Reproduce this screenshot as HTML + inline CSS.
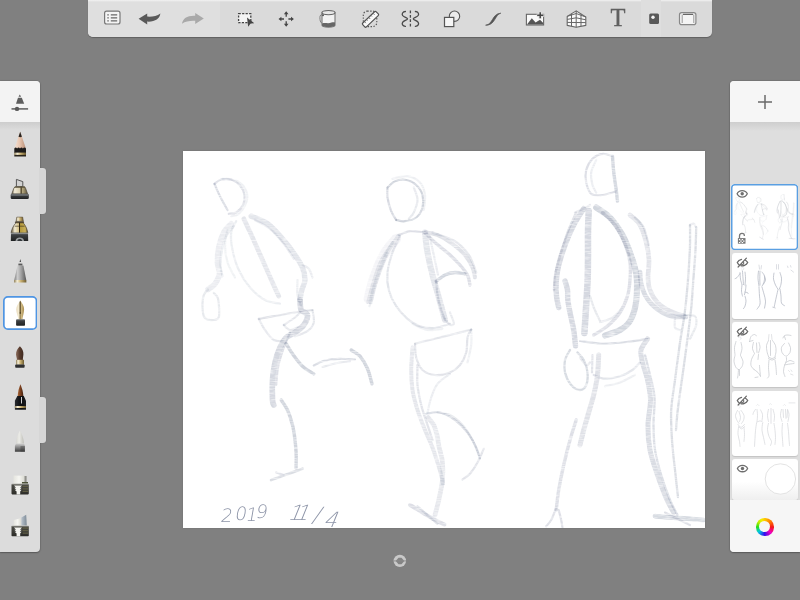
<!DOCTYPE html>
<html lang="en"><head><meta charset="utf-8"><title>Sketch</title>
<style>
*{box-sizing:border-box;margin:0;padding:0}
html,body{width:800px;height:600px;overflow:hidden;background:#808080;font-family:"Liberation Sans",sans-serif}
#app{position:relative;width:800px;height:600px;background:#808080;overflow:hidden}
.abs{position:absolute}
#topbar{left:88px;top:0;width:624px;height:37px;background:#dadada;border-radius:0 0 5px 5px;box-shadow:0 1px 1px rgba(0,0,0,.25);overflow:hidden}
#topbar .lt{left:0;top:0;width:132px;height:37px;background:#dfdfdf}
#topbar .hl{left:0;top:0;width:624px;height:2px;background:linear-gradient(#f2f2f2,rgba(240,240,240,0))}
#topbar svg{position:absolute;left:0;top:0}
#tT{position:absolute;left:519.8px;top:4.4px;width:20px;text-align:center;font:24.5px/28px "Liberation Serif",serif;color:#606060;-webkit-text-stroke:.35px #606060;will-change:transform}
#canvas{left:183px;top:151px;width:522px;height:377px;background:#fff;box-shadow:0 0 2px rgba(0,0,0,.15)}
#left{left:0;top:81px;width:40px;height:471px;background:#dcdcdc;border-radius:0 4px 4px 0;box-shadow:0 0 1.5px rgba(0,0,0,.4),0 1px 1.5px rgba(0,0,0,.25)}
#left .hd{left:0;top:0;width:40px;height:41px;background:#f3f3f3;border-radius:0 4px 0 0}
#left .sh{left:0;top:41px;width:40px;height:8px;background:linear-gradient(#cdcdcd,#dcdcdc)}
.tab{left:40px;width:6px;height:46px;background:#d6d6d6;border-radius:0 3px 3px 0;box-shadow:0 0 1px rgba(0,0,0,.25)}
#sel{left:2.8px;top:214.9px;width:34.3px;height:34px}
#right{left:730px;top:81px;width:70px;height:471px;background:#dedede;border-radius:4px 0 0 4px;box-shadow:0 0 1.5px rgba(0,0,0,.4),0 1px 1.5px rgba(0,0,0,.25)}
#rin{left:0;top:0;width:70px;height:471px;border-radius:4px 0 0 4px;overflow:hidden}
#rc{left:0;top:1px;width:70px;height:470px}
#right .hd{left:0;top:-1px;width:70px;height:41px;background:#f6f6f6}
#right .sh{left:0;top:40px;width:70px;height:9px;background:linear-gradient(#cecece,#dedede)}
#right .ft{left:0;top:418px;width:70px;height:52px;background:#f6f6f6}
.layer{left:2px;width:66px;background:#fff;border-radius:3px;box-shadow:0 1px 1px rgba(0,0,0,.12);overflow:hidden}
.layer.on{box-shadow:none}
.layer svg{position:absolute;left:0;top:0}
#ring{left:26px;top:436px;width:17.5px;height:17.5px;border-radius:50%;background:conic-gradient(from 0deg,#ffc400 0deg,#ff7a00 45deg,#f41818 90deg,#f000c0 135deg,#3010f0 185deg,#00c8e0 232deg,#2adf10 272deg,#b8ee00 305deg,#f4ee00 335deg,#ffc400 360deg)}
#ring i{position:absolute;left:3.25px;top:3.25px;width:11px;height:11px;border-radius:50%;background:#f6f6f6}
</style></head><body>
<div id="app">

<div id="canvas" class="abs">
<svg width="522" height="377" viewBox="0 0 522 377">
<defs><filter id="pb" x="-5%" y="-5%" width="110%" height="110%"><feGaussianBlur stdDeviation="0.5" result="b"/><feTurbulence type="fractalNoise" baseFrequency="0.12 0.85" numOctaves="2" seed="4" result="n"/><feColorMatrix in="n" type="matrix" values="0 0 0 0 0 0 0 0 0 0 0 0 0 0 0 0 0 0 1.5 0.1" result="a"/><feComposite in="b" in2="a" operator="in" result="c"/><feGaussianBlur in="c" stdDeviation="0.4"/></filter></defs>
<g fill="none" stroke="#5d6a88" stroke-linecap="round" stroke-linejoin="round" filter="url(#pb)">
<path d="M31.5 32.8C32.4 34.8 34.8 40.9 37.0 45.2C39.2 49.6 43.2 56.7 44.5 59.0" stroke-width="2.2" opacity="0.24"/>
<path d="M31.5 32.8C32.6 32.0 35.5 29.2 38.2 28.5C41.0 27.8 45.1 27.5 48.2 28.5C51.4 29.5 54.8 31.9 57.0 34.5C59.2 37.1 61.0 40.8 61.5 44.0C62.0 47.2 61.4 51.1 60.0 54.0C58.6 56.9 55.6 60.0 53.2 61.5C50.9 63.0 47.0 62.5 45.8 62.8" stroke-width="2.2" opacity="0.21"/>
<path d="M39.5 27.8C42.0 28.2 50.5 28.2 54.5 30.2C58.5 32.3 61.8 36.7 63.2 40.2C64.7 43.8 64.5 47.8 63.2 51.5C62.0 55.2 58.2 60.5 55.8 62.8C53.2 65.0 49.5 64.8 48.2 65.2" stroke-width="2.2" opacity="0.10"/>
<path d="M48.2 72.8C47.0 74.2 42.8 77.5 40.8 81.5C38.7 85.5 36.8 91.5 35.8 96.5C34.7 101.5 34.4 107.1 34.5 111.5C34.6 115.9 36.9 119.2 36.5 122.8C36.1 126.3 33.9 130.1 32.0 132.8C30.1 135.4 26.2 137.5 25.0 138.5" stroke-width="5.7" opacity="0.13"/>
<path d="M50.8 75.2C49.5 76.9 45.2 81.3 43.2 85.2C41.3 89.2 40.0 94.2 39.0 99.0C38.0 103.8 37.4 109.6 37.5 114.0C37.6 118.4 39.2 123.4 39.5 125.2" stroke-width="2.2" opacity="0.12"/>
<path d="M25.0 138.5C24.3 139.4 21.7 141.2 20.8 144.0C19.8 146.8 19.4 151.5 19.5 155.2C19.6 159.0 19.6 164.2 21.5 166.5C23.4 168.8 28.3 169.2 30.8 169.0C33.2 168.8 35.3 168.8 36.0 165.2C36.7 161.7 35.9 151.6 35.0 147.8C34.1 143.9 31.5 143.0 30.8 142.0" stroke-width="2.2" opacity="0.15"/>
<path d="M53.2 70.2C52.4 72.1 48.9 76.7 48.2 81.5C47.6 86.3 48.2 92.8 49.5 99.0C50.8 105.2 52.8 112.8 55.8 119.0C58.7 125.2 62.6 131.5 67.0 136.5C71.4 141.5 77.0 146.3 82.0 149.0C87.0 151.7 94.5 152.1 97.0 152.8" stroke-width="2.2" opacity="0.12"/>
<path d="M60.8 67.8C62.2 70.9 66.4 79.6 69.5 86.5C72.6 93.4 76.2 101.5 79.5 109.0C82.8 116.5 86.8 125.5 89.5 131.5C92.2 137.5 94.7 143.0 95.8 145.2" stroke-width="4.7" opacity="0.17"/>
<path d="M68.2 65.2C71.0 66.5 79.3 69.0 84.5 72.8C89.7 76.5 94.9 82.5 99.5 87.8C104.1 93.0 108.7 99.2 112.0 104.0C115.3 108.8 117.8 112.3 119.5 116.5C121.2 120.7 122.1 125.2 122.0 129.0C121.9 132.8 119.6 135.7 118.8 139.0C117.9 142.3 117.3 147.3 117.0 149.0" stroke-width="5.4" opacity="0.18"/>
<path d="M72.0 69.0C74.5 70.5 82.2 73.8 87.0 77.8C91.8 81.7 96.8 87.8 100.8 92.8C104.7 97.8 109.1 105.2 110.8 107.8" stroke-width="2.2" opacity="0.12"/>
<path d="M119.5 114.0C120.5 114.6 124.1 115.7 125.8 117.8C127.4 119.8 128.9 125.0 129.5 126.5" stroke-width="2.2" opacity="0.13"/>
<path d="M44.5 79.0C44.1 81.5 42.0 88.6 42.0 94.0C42.0 99.4 42.8 106.1 44.5 111.5C46.2 116.9 50.8 124.0 52.0 126.5" stroke-width="2.2" opacity="0.09"/>
<path d="M114.5 129.0C114.5 131.5 113.9 139.6 114.5 144.0C115.1 148.4 117.6 153.4 118.2 155.2" stroke-width="2.2" opacity="0.12"/>
<path d="M75.8 167.8C78.9 167.2 88.0 165.6 94.5 164.5C101.0 163.4 108.7 161.9 114.5 161.0C120.3 160.1 127.0 159.3 129.5 159.0" stroke-width="2.2" opacity="0.20"/>
<path d="M75.8 167.8C76.8 169.6 79.5 175.5 82.0 179.0C84.5 182.5 87.6 187.1 90.8 189.0C93.9 190.9 99.1 190.0 100.8 190.2" stroke-width="2.2" opacity="0.17"/>
<path d="M129.5 159.0C129.7 161.1 131.6 168.0 130.8 171.5C129.9 175.0 127.6 178.0 124.5 180.2C121.4 182.5 114.1 184.4 112.0 185.2" stroke-width="2.2" opacity="0.17"/>
<path d="M100.8 174.0C102.6 172.8 109.3 168.6 112.0 166.5C114.7 164.4 116.2 162.3 117.0 161.5" stroke-width="2.2" opacity="0.16"/>
<path d="M100.8 174.0C101.8 174.8 104.7 178.6 107.0 179.0C109.3 179.4 113.2 176.9 114.5 176.5" stroke-width="2.2" opacity="0.16"/>
<path d="M117.0 149.0C117.2 150.7 117.0 156.5 118.2 159.0C119.5 161.5 124.1 161.5 124.5 164.0C124.9 166.5 122.8 171.1 120.8 174.0C118.7 176.9 114.9 179.4 112.0 181.5C109.1 183.6 105.8 184.0 103.2 186.5C100.8 189.0 98.9 192.3 97.0 196.5C95.1 200.7 93.2 206.1 92.0 211.5C90.8 216.9 89.9 222.8 89.5 229.0C89.1 235.2 89.3 244.8 89.5 249.0C89.7 253.2 90.5 253.2 90.8 254.0" stroke-width="5.7" opacity="0.26"/>
<path d="M107.0 181.5C105.8 184.4 102.0 193.2 100.0 199.0C98.0 204.8 96.1 210.7 95.0 216.5C93.9 222.3 93.5 231.1 93.2 234.0" stroke-width="2.2" opacity="0.21"/>
<path d="M103.2 192.8C104.3 194.4 106.8 199.0 109.5 202.8C112.2 206.5 116.0 211.9 119.5 215.2C123.0 218.6 128.9 221.5 130.8 222.8" stroke-width="3.4" opacity="0.29"/>
<path d="M130.8 214.5C132.6 213.7 137.6 210.6 142.0 209.5C146.4 208.4 152.0 207.9 157.0 207.8C162.0 207.6 169.5 208.4 172.0 208.5" stroke-width="2.2" opacity="0.24"/>
<path d="M139.5 216.0C142.0 215.3 149.9 213.0 154.5 212.0C159.1 211.0 164.9 210.5 167.0 210.2" stroke-width="2.2" opacity="0.14"/>
<path d="M168.2 199.0C169.7 200.0 174.3 202.1 177.0 205.2C179.7 208.4 182.5 213.2 184.5 217.8C186.5 222.3 188.2 230.2 189.0 232.8" stroke-width="3.4" opacity="0.29"/>
<path d="M98.2 249.0C99.3 250.7 102.6 254.8 104.5 259.0C106.4 263.2 108.2 269.0 109.5 274.0C110.8 279.0 111.4 284.0 112.0 289.0C112.6 294.0 113.1 299.3 113.2 304.0C113.4 308.7 113.0 314.8 113.0 317.0" stroke-width="3.4" opacity="0.29"/>
<path d="M88.2 329.0C90.5 328.2 96.8 325.9 102.0 324.0C107.2 322.1 116.6 318.8 119.5 317.8" stroke-width="2.8" opacity="0.23"/>
<path d="M93.2 321.5L100.8 324.0" stroke-width="2.2" opacity="0.18"/>
<path d="M204.5 36.5C204.5 38.2 203.9 42.5 204.5 46.5C205.1 50.5 206.8 56.5 208.2 60.2C209.7 64.0 212.4 67.5 213.2 69.0" stroke-width="2.2" opacity="0.26"/>
<path d="M204.5 36.5C205.8 35.5 208.9 31.5 212.0 30.2C215.1 29.0 219.7 28.4 223.2 29.0C226.8 29.6 230.5 31.5 233.2 34.0C236.0 36.5 238.5 40.2 239.5 44.0C240.5 47.8 240.5 52.8 239.5 56.5C238.5 60.2 236.2 64.2 233.2 66.5C230.3 68.8 225.3 69.8 222.0 70.2C218.7 70.7 214.7 69.2 213.2 69.0" stroke-width="2.2" opacity="0.29"/>
<path d="M209.5 27.8C212.0 27.3 219.9 24.6 224.5 25.2C229.1 25.9 234.1 28.4 237.0 31.5C239.9 34.6 241.4 39.4 242.0 44.0C242.6 48.6 241.0 56.5 240.8 59.0" stroke-width="2.2" opacity="0.11"/>
<path d="M230.8 36.5C231.4 38.6 234.5 44.8 234.5 49.0C234.5 53.2 232.2 58.4 230.8 61.5C229.3 64.6 226.6 66.7 225.8 67.8" stroke-width="2.2" opacity="0.14"/>
<path d="M215.8 84.0C217.6 83.4 223.0 80.8 227.0 80.2C231.0 79.8 237.4 80.9 239.5 81.0" stroke-width="2.2" opacity="0.21"/>
<path d="M213.2 87.8C211.3 90.2 204.7 97.5 201.5 102.8C198.3 108.0 196.1 113.8 194.0 119.0C191.9 124.2 190.4 129.2 189.0 134.0C187.6 138.8 186.1 145.5 185.5 147.8" stroke-width="9.9" opacity="0.07"/>
<path d="M215.8 84.5C214.0 87.1 208.1 94.5 205.0 100.2C201.9 106.0 199.3 113.0 197.0 119.0C194.7 125.0 192.8 131.1 191.2 136.5C189.7 141.9 188.1 149.0 187.5 151.5" stroke-width="4.0" opacity="0.14"/>
<path d="M209.5 91.5C207.6 94.4 201.4 102.8 198.2 109.0C195.1 115.2 193.0 121.9 190.8 129.0C188.5 136.1 185.5 147.8 184.5 151.5" stroke-width="2.8" opacity="0.14"/>
<path d="M204.5 101.5C202.9 105.2 197.6 116.9 195.0 124.0C192.4 131.1 190.4 138.8 189.0 144.0C187.6 149.2 186.9 153.4 186.5 155.2" stroke-width="2.2" opacity="0.13"/>
<path d="M217.0 85.2C215.8 88.0 211.6 95.5 209.5 101.5C207.4 107.5 205.1 115.2 204.5 121.5C203.9 127.8 204.3 133.4 205.8 139.0C207.2 144.6 210.1 150.5 213.2 155.2C216.4 160.0 220.5 164.4 224.5 167.8C228.5 171.1 232.4 173.7 237.0 175.2C241.6 176.8 247.0 177.4 252.0 177.0C257.0 176.6 264.5 173.5 267.0 172.8" stroke-width="2.2" opacity="0.18"/>
<path d="M242.0 81.5C242.4 84.8 243.2 94.4 244.5 101.5C245.8 108.6 247.6 116.5 249.5 124.0C251.4 131.5 253.7 139.0 255.8 146.5C257.8 154.0 261.0 165.2 262.0 169.0" stroke-width="6.1" opacity="0.18"/>
<path d="M246.5 84.5C247.2 87.8 249.3 97.4 250.8 104.0C252.2 110.6 254.3 120.7 255.0 124.0" stroke-width="2.2" opacity="0.13"/>
<path d="M242.0 81.5C244.1 81.9 249.9 82.1 254.5 84.0C259.1 85.9 264.9 89.4 269.5 92.8C274.1 96.1 278.7 100.0 282.0 104.0C285.3 108.0 287.8 112.8 289.5 116.5C291.2 120.2 291.6 124.8 292.0 126.5" stroke-width="4.0" opacity="0.20"/>
<path d="M249.5 81.5C253.2 83.0 266.0 86.5 272.0 90.2C278.0 94.0 282.2 98.8 285.8 104.0C289.3 109.2 292.0 118.6 293.2 121.5" stroke-width="2.3" opacity="0.17"/>
<path d="M242.0 81.5C243.7 83.2 247.8 87.8 252.0 91.5C256.2 95.2 262.8 100.2 267.0 104.0C271.2 107.8 274.1 110.7 277.0 114.0C279.9 117.3 282.8 120.7 284.5 124.0C286.2 127.3 286.6 132.3 287.0 134.0" stroke-width="3.4" opacity="0.21"/>
<path d="M253.2 130.2C254.7 129.2 258.9 125.5 262.0 124.0C265.1 122.5 268.7 121.7 272.0 121.5C275.3 121.3 280.3 122.5 282.0 122.8" stroke-width="3.4" opacity="0.27"/>
<path d="M253.2 130.2C253.5 132.5 253.7 139.2 254.5 144.0C255.3 148.8 257.0 154.8 258.2 159.0C259.5 163.2 261.4 167.3 262.0 169.0" stroke-width="2.2" opacity="0.22"/>
<path d="M262.0 167.8C262.6 168.6 264.5 171.7 265.8 172.8C267.0 173.8 268.7 174.2 269.5 174.0C270.3 173.8 271.2 173.6 270.8 171.5C270.3 169.4 267.6 163.2 267.0 161.5" stroke-width="2.2" opacity="0.14"/>
<path d="M229.5 172.8C232.0 173.8 239.5 178.2 244.5 179.0C249.5 179.8 257.0 178.0 259.5 177.8" stroke-width="2.2" opacity="0.10"/>
<path d="M232.0 192.8C235.3 191.9 245.3 189.4 252.0 187.8C258.7 186.1 266.0 184.3 272.0 182.8C278.0 181.2 285.5 179.2 288.2 178.5" stroke-width="2.2" opacity="0.17"/>
<path d="M232.0 192.8C232.2 195.0 232.0 202.1 233.2 206.5C234.5 210.9 236.4 216.1 239.5 219.0C242.6 221.9 247.4 223.6 252.0 224.0C256.6 224.4 262.8 223.2 267.0 221.5C271.2 219.8 274.3 217.3 277.0 214.0C279.7 210.7 282.0 206.1 283.2 201.5C284.5 196.9 283.7 190.3 284.5 186.5C285.3 182.7 287.6 179.8 288.2 178.5" stroke-width="2.2" opacity="0.19"/>
<path d="M288.2 178.5C288.2 181.1 288.9 188.5 288.2 194.0C287.6 199.5 285.1 208.6 284.5 211.5" stroke-width="2.2" opacity="0.10"/>
<path d="M229.5 196.5C229.3 200.2 228.2 211.9 228.2 219.0C228.2 226.1 228.5 232.3 229.5 239.0C230.5 245.7 232.4 252.3 234.5 259.0C236.6 265.7 239.5 272.8 242.0 279.0C244.5 285.2 247.4 291.1 249.5 296.5C251.6 301.9 253.0 306.9 254.5 311.5C256.0 316.1 257.3 320.5 258.2 324.0C259.2 327.5 259.7 331.3 260.0 332.8" stroke-width="4.0" opacity="0.17"/>
<path d="M234.5 214.0C234.5 217.3 233.9 227.3 234.5 234.0C235.1 240.7 236.6 247.3 238.2 254.0C239.9 260.7 242.6 268.2 244.5 274.0C246.4 279.8 248.7 286.5 249.5 289.0" stroke-width="2.3" opacity="0.19"/>
<path d="M267.0 222.8C264.9 224.4 257.6 228.8 254.5 232.8C251.4 236.7 249.9 241.7 248.2 246.5C246.6 251.3 245.1 259.0 244.5 261.5" stroke-width="2.2" opacity="0.13"/>
<path d="M245.0 266.5C246.0 267.8 249.2 271.1 250.8 274.0C252.2 276.9 253.1 280.2 254.0 284.0C254.9 287.8 255.3 291.9 256.2 296.5C257.2 301.1 259.0 306.1 259.5 311.5C260.0 316.9 260.1 322.8 259.5 329.0C258.9 335.2 257.0 343.2 255.8 349.0C254.5 354.8 252.6 361.5 252.0 364.0" stroke-width="4.7" opacity="0.16"/>
<path d="M243.2 262.8C245.5 262.5 252.2 260.5 257.0 261.5C261.8 262.5 267.4 265.7 272.0 269.0C276.6 272.3 281.0 276.9 284.5 281.5C288.0 286.1 291.2 292.1 293.2 296.5C295.3 300.9 296.4 305.9 297.0 307.8" stroke-width="2.2" opacity="0.22"/>
<path d="M254.5 261.5C256.6 261.9 262.8 261.9 267.0 264.0C271.2 266.1 275.8 269.8 279.5 274.0C283.2 278.2 286.8 284.0 289.5 289.0C292.2 294.0 294.7 301.5 295.8 304.0" stroke-width="2.2" opacity="0.15"/>
<path d="M300.8 297.8C299.7 300.0 296.8 307.3 294.5 311.5C292.2 315.7 289.5 319.9 287.0 322.8C284.5 325.6 280.8 327.5 279.5 328.5" stroke-width="2.2" opacity="0.19"/>
<path d="M227.0 354.0C229.1 355.2 235.3 359.0 239.5 361.5C243.7 364.0 248.3 367.0 252.0 369.0C255.7 371.0 259.9 372.8 261.5 373.5" stroke-width="4.0" opacity="0.21"/>
<path d="M234.5 355.2C236.6 357.1 243.7 363.6 247.0 366.5C250.3 369.4 253.2 371.7 254.5 372.8" stroke-width="2.2" opacity="0.19"/>
<path d="M429.5 5.2C429.7 8.0 430.1 15.9 430.8 21.5C431.4 27.1 432.6 34.2 433.2 39.0C433.9 43.8 434.3 48.4 434.5 50.2" stroke-width="3.4" opacity="0.27"/>
<path d="M429.5 5.2C427.8 4.8 422.8 2.3 419.5 2.8C416.2 3.2 412.2 5.0 409.5 7.8C406.8 10.5 404.3 15.0 403.2 19.0C402.2 23.0 402.4 27.5 403.2 31.5C404.1 35.5 405.5 40.7 408.2 42.8C411.0 44.8 415.3 44.4 419.5 44.0C423.7 43.6 431.0 40.9 433.2 40.2" stroke-width="2.2" opacity="0.21"/>
<path d="M413.2 9.0C412.4 11.1 408.9 17.3 408.2 21.5C407.6 25.7 408.7 30.7 409.5 34.0C410.3 37.3 412.6 40.2 413.2 41.5" stroke-width="2.2" opacity="0.13"/>
<path d="M407.0 54.0C406.0 54.6 403.2 56.5 400.8 57.8C398.2 59.0 393.5 60.9 392.0 61.5" stroke-width="2.2" opacity="0.16"/>
<path d="M400.7 57.7C399.0 60.4 393.8 68.0 390.7 74.0C387.6 80.0 384.5 87.3 382.0 94.0C379.5 100.7 377.2 107.8 375.7 114.0C374.2 120.2 373.6 126.3 373.2 131.5C372.8 136.7 373.1 140.8 373.5 145.0C373.9 149.2 375.3 154.6 375.7 156.5" stroke-width="5.4" opacity="0.26"/>
<path d="M393.2 61.5C391.8 64.8 387.0 74.8 384.5 81.5C382.0 88.2 380.3 94.4 378.2 101.5C376.1 108.6 373.2 117.8 372.0 124.0C370.8 130.2 371.2 136.5 371.0 139.0" stroke-width="2.3" opacity="0.20"/>
<path d="M382.0 130.0C382.4 131.5 384.0 135.8 384.5 139.0C385.0 142.2 384.4 145.2 384.8 149.0C385.2 152.8 386.0 156.5 387.0 161.5C388.0 166.5 389.8 173.4 390.7 179.0C391.6 184.6 392.2 192.3 392.5 195.0" stroke-width="5.4" opacity="0.26"/>
<path d="M405.7 60.0C405.6 63.6 405.1 73.8 405.0 81.5C404.9 89.2 405.1 98.4 405.0 106.5C404.9 114.6 404.9 122.1 404.6 130.0C404.3 137.9 403.7 145.3 403.2 154.0C402.7 162.7 401.7 177.3 401.4 182.0" stroke-width="6.5" opacity="0.26"/>
<path d="M413.2 56.5C415.5 58.2 422.6 61.9 427.0 66.5C431.4 71.1 436.2 78.2 439.5 84.0C442.8 89.8 444.9 96.0 447.0 101.5C449.1 107.0 450.8 112.1 452.0 117.0C453.2 121.9 453.9 124.8 454.0 131.0C454.1 137.2 453.8 147.5 452.6 154.0C451.4 160.5 449.6 165.8 447.0 170.0C444.4 174.2 441.2 176.6 437.0 179.0C432.8 181.4 424.5 183.6 422.0 184.5" stroke-width="6.1" opacity="0.28"/>
<path d="M419.5 61.5C421.6 63.6 428.2 68.8 432.0 74.0C435.8 79.2 439.5 86.8 442.0 93.0C444.5 99.2 446.2 105.0 447.0 111.0C447.8 117.0 447.4 123.3 447.0 129.0C446.6 134.7 446.2 139.6 444.5 145.0C442.8 150.4 440.3 156.5 437.0 161.5C433.7 166.5 428.9 171.2 424.5 175.0C420.1 178.8 413.0 182.5 410.7 184.0" stroke-width="3.4" opacity="0.21"/>
<path d="M407.0 145.0C407.7 147.0 409.3 152.8 411.0 157.0C412.7 161.2 416.0 167.8 417.0 170.0" stroke-width="2.2" opacity="0.15"/>
<path d="M417.0 171.0C419.0 170.3 425.3 169.3 429.0 167.0C432.7 164.7 437.3 158.7 439.0 157.0" stroke-width="2.2" opacity="0.13"/>
<path d="M447.0 64.0C448.7 65.7 454.3 69.4 457.0 74.0C459.7 78.6 461.7 85.7 463.2 91.5C464.7 97.3 465.7 103.1 466.0 109.0C466.3 114.9 464.8 122.0 465.0 127.0C465.2 132.0 465.4 134.9 467.0 139.0C468.6 143.1 471.2 148.0 474.5 151.5C477.8 155.0 482.6 157.8 487.0 160.0C491.4 162.2 498.7 164.2 501.0 165.0" stroke-width="4.7" opacity="0.19"/>
<path d="M452.0 66.5C453.4 68.2 458.4 71.9 460.7 76.5C463.0 81.1 464.9 91.1 465.7 94.0" stroke-width="2.2" opacity="0.17"/>
<path d="M457.0 121.0C457.2 122.8 457.2 128.2 458.0 132.0C458.8 135.8 460.1 140.3 462.0 144.0C463.9 147.7 466.6 151.1 469.5 154.0C472.4 156.9 476.2 159.6 479.5 161.5C482.8 163.4 485.1 164.8 489.0 165.5C492.9 166.2 500.7 165.9 503.0 166.0" stroke-width="4.7" opacity="0.24"/>
<path d="M507.0 74.0C507.0 77.3 507.2 86.5 507.0 94.0C506.8 101.5 506.3 109.8 505.7 119.0C505.1 128.2 504.0 140.7 503.2 149.0C502.4 157.3 501.7 161.9 500.7 169.0C499.7 176.1 498.4 181.5 497.0 191.5C495.6 201.5 493.5 217.8 492.0 229.0C490.5 240.2 488.7 249.0 488.2 259.0C487.7 269.0 488.4 279.0 489.0 289.0C489.6 299.0 491.0 309.5 492.0 319.0C493.0 328.5 494.5 341.5 495.0 346.0" stroke-width="2.3" opacity="0.23"/>
<path d="M513.2 76.5C513.1 80.2 512.9 91.1 512.5 99.0C512.1 106.9 511.4 114.8 510.7 124.0C510.0 133.2 509.4 144.0 508.5 154.0C507.6 164.0 506.4 172.8 505.0 184.0C503.6 195.2 501.7 208.8 500.0 221.0C498.3 233.2 496.2 247.3 495.0 257.0C493.8 266.7 493.3 275.3 493.0 279.0" stroke-width="2.3" opacity="0.23"/>
<path d="M507.0 74.0C507.6 73.8 509.7 72.3 510.7 72.7C511.7 73.1 512.8 75.9 513.2 76.5" stroke-width="2.2" opacity="0.13"/>
<path d="M492.0 166.5C492.0 168.2 491.2 174.4 492.0 176.5C492.8 178.6 496.2 178.6 497.0 179.0" stroke-width="2.2" opacity="0.13"/>
<path d="M502.0 164.0C503.7 164.2 510.1 163.5 512.0 165.2C513.9 166.9 513.6 171.1 513.2 174.0C512.8 176.9 510.5 180.4 509.5 182.7C508.5 185.0 507.4 186.9 507.0 187.7" stroke-width="2.2" opacity="0.15"/>
<path d="M387.0 199.0C386.2 200.7 382.8 205.2 382.0 209.0C381.2 212.8 381.0 217.3 382.0 221.5C383.0 225.7 385.7 231.1 388.2 234.0C390.7 236.9 394.5 239.0 397.0 239.0C399.5 239.0 402.0 236.9 403.2 234.0C404.5 231.1 404.9 225.7 404.5 221.5C404.1 217.3 402.4 212.3 400.7 209.0C399.0 205.7 395.5 202.8 394.5 201.5" stroke-width="2.3" opacity="0.25"/>
<path d="M397.0 206.5C398.0 207.8 401.5 213.2 403.2 214.0C404.9 214.8 406.4 211.9 407.0 211.5" stroke-width="2.2" opacity="0.16"/>
<path d="M397.0 190.0C400.5 190.4 410.3 192.3 418.0 192.5C425.7 192.7 435.2 191.8 443.0 191.0C450.8 190.2 460.9 188.5 464.5 188.0" stroke-width="2.2" opacity="0.24"/>
<path d="M410.7 224.0C412.6 224.6 417.6 227.5 422.0 227.7C426.4 227.9 432.4 226.6 437.0 225.2C441.6 223.8 446.2 221.3 449.5 219.0C452.8 216.7 455.8 212.8 457.0 211.5" stroke-width="2.2" opacity="0.18"/>
<path d="M422.0 235.2C424.5 234.6 432.0 233.4 437.0 231.5C442.0 229.6 449.5 225.2 452.0 224.0" stroke-width="2.2" opacity="0.11"/>
<path d="M464.5 188.0C463.4 189.8 458.8 195.1 458.0 199.0C457.2 202.9 458.4 206.5 459.5 211.5C460.6 216.5 463.2 222.8 464.5 229.0C465.8 235.2 467.4 241.5 467.5 249.0C467.6 256.5 465.1 265.7 465.0 274.0C464.9 282.3 465.4 290.7 467.0 299.0C468.6 307.3 471.8 316.1 474.5 324.0C477.2 331.9 480.3 340.2 483.0 346.5C485.7 352.8 489.4 359.0 490.7 361.5" stroke-width="5.0" opacity="0.24"/>
<path d="M462.0 204.0C462.8 207.3 465.4 217.0 467.0 224.0C468.6 231.0 470.9 237.7 471.5 246.0C472.1 254.3 470.4 265.2 470.5 274.0C470.6 282.8 470.7 290.7 472.0 299.0C473.3 307.3 475.7 315.7 478.2 324.0C480.7 332.3 484.3 342.3 487.0 349.0C489.7 355.7 493.2 361.5 494.5 364.0" stroke-width="2.3" opacity="0.22"/>
<path d="M415.7 204.0C415.5 207.3 415.3 217.3 414.5 224.0C413.7 230.7 412.2 237.8 410.7 244.0C409.2 250.2 407.4 255.7 405.7 261.5C404.0 267.3 402.2 273.6 400.7 279.0C399.3 284.4 397.6 291.5 397.0 294.0" stroke-width="5.0" opacity="0.20"/>
<path d="M409.5 204.0L409.0 221.5" stroke-width="2.2" opacity="0.19"/>
<path d="M393.2 269.0C392.2 272.3 389.1 281.5 387.0 289.0C384.9 296.5 382.6 305.7 380.7 314.0C378.8 322.3 377.0 331.5 375.7 339.0C374.5 346.5 373.6 355.7 373.2 359.0" stroke-width="3.4" opacity="0.21"/>
<path d="M373.2 356.5C372.4 358.6 369.9 365.9 368.2 369.0C366.5 372.1 364.0 374.2 363.2 375.2" stroke-width="2.2" opacity="0.21"/>
<path d="M375.7 359.0C376.1 360.7 377.6 366.1 378.2 369.0C378.8 371.9 379.3 375.2 379.5 376.5" stroke-width="2.2" opacity="0.21"/>
<path d="M472.0 365.2C474.5 365.4 481.6 366.1 487.0 366.5C492.4 366.9 498.9 367.3 504.5 367.7C510.1 368.1 518.0 368.8 520.7 369.0" stroke-width="4.7" opacity="0.25"/>
<path d="M482.0 361.5C484.5 362.8 492.8 366.9 497.0 369.0C501.2 371.1 505.3 373.2 507.0 374.0" stroke-width="2.2" opacity="0.20"/>
</g>
<g font-family="'DejaVu Sans Light','DejaVu Sans','Liberation Sans',sans-serif" font-weight="200" fill="#717a92" opacity=".8">
<text transform="translate(37 370) skewX(-10)" font-size="18.500" x="0 14 25 34.500" y="0.500 -1 -.5 -3.500">2019</text>
<text transform="translate(104 369) skewX(-22)" font-size="21" x="0 7.500 25 38.500" y="0 0 1.500 7">11/4</text>
</g>
</svg>
</div>

<div id="topbar" class="abs">
<div class="lt abs"></div><div class="hl abs"></div>
<div class="abs" style="left:553px;top:0;width:20px;height:37px;background:#dedede"></div>
<svg width="624" height="37" viewBox="88 0 624 37">
<!-- menu -->
<rect x="104.600" y="11.200" width="15.400" height="12.800" rx="2" fill="#f4f4f4" stroke="#777" stroke-width="1.200"/>
<g stroke="#666" stroke-width="1.300"><path d="M107.300 14.800h1.500M107.300 17.800h1.500M107.300 20.800h1.500M110.800 14.800h6.400M110.800 17.800h6.400M110.800 20.800h6.400"/></g>
<!-- undo -->
<path id="undo" d="M138.600 18.800L147.200 13.400V16.600C152.500 16.800 157 16.200 160.400 13.600C159.600 19 155 22 147.200 21.600V24.400Z" fill="#595959"/>
<path d="M138.600 18.800L147.200 13.400V16.600C152.500 16.800 157 16.200 160.400 13.600C159.600 19 155 22 147.200 21.600V24.400Z" fill="#a9a9a9" transform="rotate(180 171.200 18.700)"/>
<!-- select -->
<rect x="238.600" y="13.700" width="12.200" height="9" fill="#f4f4f4" stroke="#444" stroke-width="1.300" stroke-dasharray="2.200 1.300"/>
<path d="M247 17.600L254.300 23.200L250.600 23.600L248.200 26.800Z" fill="#444"/>
<!-- move -->
<g fill="#444" stroke="#444" stroke-width="1.300"><path d="M286.200 13.500V16.800M286.200 21.200V24.500M280.700 19H284M288.400 19H291.700" fill="none"/>
<path d="M286.200 11.300l2.300 2.900h-4.600zM286.200 26.700l2.300-2.900h-4.600zM278.500 19l2.900-2.300v4.600zM293.900 19l-2.900-2.300v4.600z" stroke="none"/></g>
<!-- bucket -->
<path d="M322 12.800V25.300C322 27.700 335 27.700 335 25.300V12.800Z" fill="#f2f2f2" stroke="#777" stroke-width="1.100"/>
<path d="M322 23.400C325 22.600 329 23.800 331.500 22.600 333 22 334 22.200 335 22.400V25.300C335 27.700 322 27.700 322 25.300Z" fill="#666"/>
<ellipse cx="328.500" cy="12.600" rx="6.500" ry="2.100" fill="#e8e8e8" stroke="#666" stroke-width="1.100"/>
<path d="M322 14.600C319.800 14.600 319.700 17 320 19.500 320.300 21.800 321 23 322 23" fill="none" stroke="#777" stroke-width=".9"/>
<circle cx="323" cy="15.200" r="1" fill="#555"/>
<!-- ruler -->
<rect x="363.300" y="11.100" width="13.500" height="15.500" rx="4" fill="none" stroke="#555" stroke-width="1.100" stroke-dasharray="1.400 1.500"/>
<g transform="rotate(-43.600 370.500 19.300)"><rect x="361.150" y="16.650" width="18.700" height="5.300" rx="1.200" fill="#fafafa" stroke="#505050" stroke-width="1.200"/>
<path d="M364.500 16.700v2.200M367.500 16.700v1.600M370.500 16.700v2.200M373.500 16.700v1.600M376.500 16.700v2.200" stroke="#666" stroke-width=".8"/></g>
<!-- symmetry -->
<g fill="none" stroke="#4a4a4a" stroke-width="1.300" stroke-linecap="round"><path d="M410.400 10.500V27.400" stroke-dasharray="2.800 1.600" stroke-linecap="butt"/>
<path d="M405.400 11.500C402.600 11.700 401.600 14 402.600 15.500C403.700 17.200 407.300 17.600 407.500 18.800C407.300 20 403.700 20.700 402.600 22.300C401.600 24 402.600 26.200 405.400 26.400"/>
<path d="M415.400 11.500C418.200 11.700 419.200 14 418.200 15.500C417.100 17.200 413.500 17.600 413.300 18.800C413.500 20 417.100 20.700 418.200 22.300C419.200 24 418.200 26.200 415.400 26.400"/></g>
<!-- shapes -->
<circle cx="454.500" cy="16.200" r="5.200" fill="#ececec" stroke="#555" stroke-width="1.100"/>
<rect x="444.500" y="17.400" width="9.300" height="9.200" fill="#f6f6f6" stroke="#555" stroke-width="1.200"/>
<!-- curve -->
<path d="M485.600 25.200C493 24.600 492 13.600 500.800 13.200C494.600 14.600 495.400 25.600 485.600 25.200Z" fill="#555" stroke="#555" stroke-width=".7" stroke-linejoin="round"/>
<!-- image -->
<rect x="526.400" y="14.300" width="17.200" height="10.700" fill="#fafafa" stroke="#666" stroke-width="1.100"/>
<path d="M527 24.500L531.800 18.200L535.600 22.600L540 19.700L543 22.800V24.500Z" fill="#555"/>
<path d="M540.200 11.800v7M536.700 15.300h7" stroke="#e0e0e0" stroke-width="3.400"/>
<path d="M540.200 12.300v6M537.200 15.300h6" stroke="#444" stroke-width="1.500"/>
<!-- perspective -->
<path d="M576.200 10.900L567.200 16.400V25.400L576.200 27.300L585.800 25.400V17Z" fill="#fafafa" stroke="#666" stroke-width="1.100" stroke-linejoin="round"/>
<g stroke="#666" stroke-width="1" fill="none"><path d="M576.200 10.900V27.300M571.500 13.800V26.300M581 13.900V26.300M567.200 19.400L576.200 17.800L585.800 19.800M567.200 22.400L576.200 22.500L585.800 22.600M567.200 16.400L576.200 13.500 585.800 17"/></g>
<!-- layer dot -->
<rect x="649.200" y="13.600" width="9.800" height="10.500" rx="1.500" fill="#595959"/><circle cx="653" cy="17.300" r="1.700" fill="#f4f4f4"/>
<!-- frame -->
<rect x="679.500" y="12.600" width="16.400" height="12" rx="2.200" fill="#f4f4f4" stroke="#888" stroke-width="1.200"/>
<path d="M683 14.400h10" stroke="#666" stroke-width="1.200"/><path d="M682.200 14.500v8.500M693.800 14.500v8.500" stroke="#999" stroke-width="1"/>
</svg>

<div id="tT">T</div>
</div>

<div id="left" class="abs">
<div class="hd abs"></div><div class="sh abs"></div>
<svg id="sel" class="abs" viewBox="0 0 34.300 34"><rect x=".85" y=".85" width="32.600" height="32.300" rx="4" fill="#fff" stroke="#4f95e3" stroke-width="1.700"/></svg>
<svg class="abs" style="left:0;top:1px" width="40" height="470" viewBox="0 82 40 470">
<defs>
<linearGradient id="gWood" x1="0" x2="1"><stop offset="0" stop-color="#f3e2d6"/><stop offset=".45" stop-color="#e8c6b0"/><stop offset="1" stop-color="#b98f78"/></linearGradient>
<linearGradient id="gGold" x1="0" x2="1"><stop offset="0" stop-color="#8a7a50"/><stop offset=".25" stop-color="#f6efd8"/><stop offset=".55" stop-color="#c9b071"/><stop offset="1" stop-color="#6b5a30"/></linearGradient>
<linearGradient id="gGold2" x1="0" x2="1"><stop offset="0" stop-color="#5d5030"/><stop offset=".22" stop-color="#f1ead2"/><stop offset=".45" stop-color="#d8c48a"/><stop offset=".5" stop-color="#2a2010"/><stop offset=".56" stop-color="#b59a3c"/><stop offset=".85" stop-color="#c9b05a"/><stop offset="1" stop-color="#4a3f22"/></linearGradient>
<linearGradient id="gDark" x1="0" y1="0" x2="0" y2="1"><stop offset="0" stop-color="#6a6e70"/><stop offset=".3" stop-color="#3a3d3f"/><stop offset="1" stop-color="#1f2122"/></linearGradient>
<linearGradient id="gSilver" x1="0" x2="1"><stop offset="0" stop-color="#808080"/><stop offset=".28" stop-color="#cdcdcd"/><stop offset=".6" stop-color="#9c9c9c"/><stop offset="1" stop-color="#585858"/></linearGradient>
<linearGradient id="gNib" x1="0" x2="1"><stop offset="0" stop-color="#e9dcc0"/><stop offset=".35" stop-color="#f4ecd2"/><stop offset=".5" stop-color="#7d6a3e"/><stop offset=".6" stop-color="#d5c08a"/><stop offset="1" stop-color="#a88c50"/></linearGradient>
<linearGradient id="gBrown" x1="0" x2="1"><stop offset="0" stop-color="#8d6f5f"/><stop offset=".5" stop-color="#563a2c"/><stop offset="1" stop-color="#3e291f"/></linearGradient>
<linearGradient id="gSable" x1="0" x2="1"><stop offset="0" stop-color="#a8683a"/><stop offset=".5" stop-color="#7a3f1e"/><stop offset="1" stop-color="#3c1d0e"/></linearGradient>
<linearGradient id="gBlack" x1="0" x2="1"><stop offset="0" stop-color="#2a2c30"/><stop offset=".35" stop-color="#14161a"/><stop offset=".6" stop-color="#0c0d10"/><stop offset="1" stop-color="#1c1d20"/></linearGradient>
<linearGradient id="gWhiteTip" x1="0" x2="1"><stop offset="0" stop-color="#d6d6d0"/><stop offset=".4" stop-color="#ecece8"/><stop offset="1" stop-color="#bdbdb6"/></linearGradient>
<linearGradient id="gMetalV" x1="0" y1="0" x2="0" y2="1"><stop offset="0" stop-color="#d2d2d2"/><stop offset=".35" stop-color="#9a9a9a"/><stop offset="1" stop-color="#3c3c3c"/></linearGradient>
<linearGradient id="gFelt" x1="0" x2="1"><stop offset="0" stop-color="#e4e4de"/><stop offset=".5" stop-color="#f6f6f2"/><stop offset="1" stop-color="#d8d8d0"/></linearGradient>
<linearGradient id="gBase" x1="0" y1="0" x2="0" y2="1"><stop offset="0" stop-color="#c0c0ba"/><stop offset=".14" stop-color="#4a4a44"/><stop offset="1" stop-color="#2c2c28"/></linearGradient>
<linearGradient id="gCream" x1="0" x2="1"><stop offset="0" stop-color="#6d6448"/><stop offset=".18" stop-color="#efe9d6"/><stop offset=".5" stop-color="#d9cfb0"/><stop offset=".6" stop-color="#4a4028"/><stop offset=".68" stop-color="#b5a880"/><stop offset="1" stop-color="#5a5138"/></linearGradient>
<linearGradient id="gBlue" x1="0" x2="1"><stop offset="0" stop-color="#b8c2cc"/><stop offset="1" stop-color="#7d8a96"/></linearGradient>
</defs>
<!-- size/opacity header icon -->
<path d="M19.800 94.400L21.100 96.800H18.500Z" fill="#5e5e5e"/><path d="M18 97.700H21.800L24.200 103.800H16Z" fill="#5e5e5e"/>
<path d="M11.500 108.900H28.100" stroke="#666" stroke-width="1.600"/><circle cx="17" cy="108.900" r="2.200" fill="#5a5a5a"/>
<!-- 1 pencil -->
<path d="M20.200 131.700L25.900 148.500H14.400Z" fill="url(#gWood)"/>
<path d="M20.200 131.700L21.900 136.800C21 137.400 19.400 137.400 18.500 136.800Z" fill="#2b2622"/>
<path d="M14.300 148.600c.8-1.400 2-1.400 2.800 0c.8-1.500 2.100-1.500 2.900 0c.8-1.500 2.100-1.500 2.900 0c.8-1.400 2.200-1.400 3.100 0V153H14.300Z" fill="#1d1b1a"/>
<rect x="14.300" y="152.600" width="11.700" height="2.400" fill="url(#gGold)"/><rect x="14.300" y="154.900" width="11.700" height="1.600" fill="#2a251c"/>
<!-- 2 marker -->
<path d="M16.400 179.400L22.800 181.600V186.800H16.400Z" fill="#d2d2d2" stroke="#555" stroke-width="1"/>
<path d="M15 186.700H24.600L25.700 188.600L27.600 193.900H11.800L13.700 188.600Z" fill="url(#gCream)" stroke="#4a4436" stroke-width=".7" stroke-linejoin="round"/>
<path d="M14.600 186.700H24.900L25.300 188H14.200Z" fill="#5a5138" opacity=".7"/>
<rect x="10.700" y="193.700" width="18.100" height="5.300" rx="1.300" fill="url(#gDark)"/>
<rect x="11.200" y="194.600" width="17.100" height=".9" fill="#a0a4a6" opacity=".8"/>
<!-- 3 airbrush -->
<path d="M16.800 217.100H22.700L23.400 221.400H16Z" fill="url(#gGold)" stroke="#4a4030" stroke-width=".5"/>
<rect x="14.900" y="221.400" width="9.200" height="1.500" rx=".6" fill="#4a4030"/>
<path d="M16 222.800H23.200C26 226 27.500 230 27.800 233.200H11.100C11.400 230 13 226 16 222.800Z" fill="url(#gGold2)" stroke="#3a3020" stroke-width=".6"/>
<path d="M14.700 226.200H24.600" stroke="#3a301c" stroke-width=".8" opacity=".8"/>
<path d="M11 232.800H28L28.200 240.900H10.800Z" fill="url(#gDark)"/>
<rect x="11" y="232.800" width="17" height="1.100" fill="#8e9294"/>
<path d="M15.500 240.900C16 236.500 23.500 236.500 24 240.900Z" fill="#9a9ea0"/><path d="M17.300 240.900C17.800 238.300 21.800 238.300 22.300 240.900Z" fill="#33373a"/>
<!-- 4 technical pen -->
<path d="M20.300 259L21.100 262.200H19.500Z" fill="#444"/><rect x="19.100" y="262" width="2.500" height="1.800" fill="#d9d9d9"/><rect x="18.400" y="263.600" width="4" height="2" fill="#5a5a5a"/>
<path d="M17.600 265.400H23.400L26.300 280.200H14.200Z" fill="url(#gSilver)"/>
<path d="M14.200 280H26.300L26.400 282.400H14.100Z" fill="url(#gGold)"/>
<!-- 5 nib (selected) -->
<path d="M20.300 300.600C22 303.500 24.300 306 24.100 309.500C24 313 22.700 316.500 22.400 319.400H18.400C18 316.500 16.300 313 16.200 309.500C16.200 306 18.600 303.500 20.300 300.600Z" fill="url(#gNib)"/>
<path d="M20.300 301.500V312.600" stroke="#4a3c20" stroke-width=".7"/><circle cx="20.300" cy="313" r=".8" fill="#3a2e18"/>
<rect x="16.100" y="319.200" width="8.900" height="6.500" rx=".8" fill="url(#gDark)"/>
<!-- 6 round brush -->
<path d="M19.900 346.300C22.200 348.500 23.700 351.500 23.400 354.500C23.200 356.800 22.800 358.500 22.900 360H17C17 358.500 16.200 356.800 16 354.500C15.800 351.500 17.600 348.500 19.900 346.300Z" fill="url(#gBrown)"/>
<rect x="16" y="359.800" width="8" height="4.900" fill="url(#gGold)"/>
<rect x="15.200" y="364.500" width="9.400" height="3.300" rx=".8" fill="#2e2f31"/>
<!-- 7 sable brush -->
<path d="M20.400 384.200C22 388 23.200 392 23.400 396.300H17.700C17.800 392 18.900 388 20.400 384.200Z" fill="url(#gSable)"/>
<path d="M17.300 396H23.800L26 400.800V409.700H14.900V400.800Z" fill="url(#gBlack)"/>
<path d="M21.500 397V403.500" stroke="#e6e6e6" stroke-width=".9"/><rect x="14.900" y="406" width="11.100" height="2" fill="url(#gGold)"/>
<!-- 8 white cone -->
<path d="M19.900 430.400C22.400 434.500 23.800 439 24 443.700H16C16.200 439 17.400 434.500 19.900 430.400Z" fill="url(#gWhiteTip)"/>
<path d="M16 443.400H24L24.900 446V451.800H14.900V446Z" fill="url(#gMetalV)"/>
<rect x="20.500" y="446" width="4.400" height="5.800" fill="#2c2c2c" opacity=".35"/>
<!-- 9 felt marker -->
<rect x="13.500" y="475.600" width="11.100" height="8.200" fill="url(#gFelt)"/><rect x="24.500" y="476" width="2.100" height="7.800" fill="#8f8f8a"/>
<rect x="22" y="482" width="6" height="1.800" fill="#4c5238"/>
<rect x="11.500" y="483.600" width="17.300" height="10.800" rx=".8" fill="url(#gBase)"/>
<path d="M14 485.500H22L20 487.800H21.700L19.800 489.800H21.600L20.200 491.600V494.400H16.600V491.600L14.600 489.800H16.400L14.300 487.800H16Z" fill="#f2f2ee"/>
<path d="M22.600 486.300H28.200M22.600 488.800H28.200M22.600 491.300H28.200" stroke="#5e5c44" stroke-width="1.300"/>
<!-- 10 chisel marker -->
<path d="M13.800 520L21.400 517.900V525.700H13.800Z" fill="url(#gFelt)"/>
<path d="M21.400 517.600L26.200 514.700L26.800 525.700H21.400Z" fill="url(#gBlue)"/>
<rect x="11.500" y="525.500" width="17.300" height="10.800" rx=".8" fill="url(#gBase)"/>
<path d="M14 527.400H22L20 529.700H21.700L19.800 531.700H21.600L20.200 533.500V536.300H16.600V533.500L14.600 531.700H16.400L14.300 529.700H16Z" fill="#f2f2ee"/>
<path d="M22.600 528.200H28.200M22.600 530.700H28.200M22.600 533.200H28.200" stroke="#5e5c44" stroke-width="1.300"/>
</svg>

</div>
<div class="tab abs" style="top:168px"></div>
<div class="tab abs" style="top:397px"></div>

<div id="right" class="abs"><div id="rin" class="abs"><div id="rc" class="abs">
<div class="hd abs"></div><div class="sh abs"></div>
<svg class="abs" style="left:0;top:0" width="70" height="40"><path d="M28 20h14M35 13v14" stroke="#6a6a6a" stroke-width="1.5" fill="none"/></svg>
<div class="layer on abs" style="top:102.1px;height:66.300px;left:1.300px;width:67.200px"><svg width="67.200" height="66.300" viewBox="0 0 67.200 66.300"><rect x=".75" y=".75" width="65.700" height="64.800" rx="3" fill="none" stroke="#5a9fe2" stroke-width="1.500"/><g transform="translate(.8 10) scale(.1215)" fill="none" stroke="#5f6677" stroke-linecap="round" opacity="1"><path d="M31.5 32.8C32.4 34.8 34.8 40.9 37.0 45.2C39.2 49.6 43.2 56.7 44.5 59.0" stroke-width="2.2" opacity="0.24"/>
<path d="M31.5 32.8C32.6 32.0 35.5 29.2 38.2 28.5C41.0 27.8 45.1 27.5 48.2 28.5C51.4 29.5 54.8 31.9 57.0 34.5C59.2 37.1 61.0 40.8 61.5 44.0C62.0 47.2 61.4 51.1 60.0 54.0C58.6 56.9 55.6 60.0 53.2 61.5C50.9 63.0 47.0 62.5 45.8 62.8" stroke-width="2.2" opacity="0.21"/>
<path d="M39.5 27.8C42.0 28.2 50.5 28.2 54.5 30.2C58.5 32.3 61.8 36.7 63.2 40.2C64.7 43.8 64.5 47.8 63.2 51.5C62.0 55.2 58.2 60.5 55.8 62.8C53.2 65.0 49.5 64.8 48.2 65.2" stroke-width="2.2" opacity="0.10"/>
<path d="M48.2 72.8C47.0 74.2 42.8 77.5 40.8 81.5C38.7 85.5 36.8 91.5 35.8 96.5C34.7 101.5 34.4 107.1 34.5 111.5C34.6 115.9 36.9 119.2 36.5 122.8C36.1 126.3 33.9 130.1 32.0 132.8C30.1 135.4 26.2 137.5 25.0 138.5" stroke-width="5.7" opacity="0.13"/>
<path d="M50.8 75.2C49.5 76.9 45.2 81.3 43.2 85.2C41.3 89.2 40.0 94.2 39.0 99.0C38.0 103.8 37.4 109.6 37.5 114.0C37.6 118.4 39.2 123.4 39.5 125.2" stroke-width="2.2" opacity="0.12"/>
<path d="M25.0 138.5C24.3 139.4 21.7 141.2 20.8 144.0C19.8 146.8 19.4 151.5 19.5 155.2C19.6 159.0 19.6 164.2 21.5 166.5C23.4 168.8 28.3 169.2 30.8 169.0C33.2 168.8 35.3 168.8 36.0 165.2C36.7 161.7 35.9 151.6 35.0 147.8C34.1 143.9 31.5 143.0 30.8 142.0" stroke-width="2.2" opacity="0.15"/>
<path d="M53.2 70.2C52.4 72.1 48.9 76.7 48.2 81.5C47.6 86.3 48.2 92.8 49.5 99.0C50.8 105.2 52.8 112.8 55.8 119.0C58.7 125.2 62.6 131.5 67.0 136.5C71.4 141.5 77.0 146.3 82.0 149.0C87.0 151.7 94.5 152.1 97.0 152.8" stroke-width="2.2" opacity="0.12"/>
<path d="M60.8 67.8C62.2 70.9 66.4 79.6 69.5 86.5C72.6 93.4 76.2 101.5 79.5 109.0C82.8 116.5 86.8 125.5 89.5 131.5C92.2 137.5 94.7 143.0 95.8 145.2" stroke-width="4.7" opacity="0.17"/>
<path d="M68.2 65.2C71.0 66.5 79.3 69.0 84.5 72.8C89.7 76.5 94.9 82.5 99.5 87.8C104.1 93.0 108.7 99.2 112.0 104.0C115.3 108.8 117.8 112.3 119.5 116.5C121.2 120.7 122.1 125.2 122.0 129.0C121.9 132.8 119.6 135.7 118.8 139.0C117.9 142.3 117.3 147.3 117.0 149.0" stroke-width="5.4" opacity="0.18"/>
<path d="M72.0 69.0C74.5 70.5 82.2 73.8 87.0 77.8C91.8 81.7 96.8 87.8 100.8 92.8C104.7 97.8 109.1 105.2 110.8 107.8" stroke-width="2.2" opacity="0.12"/>
<path d="M119.5 114.0C120.5 114.6 124.1 115.7 125.8 117.8C127.4 119.8 128.9 125.0 129.5 126.5" stroke-width="2.2" opacity="0.13"/>
<path d="M44.5 79.0C44.1 81.5 42.0 88.6 42.0 94.0C42.0 99.4 42.8 106.1 44.5 111.5C46.2 116.9 50.8 124.0 52.0 126.5" stroke-width="2.2" opacity="0.09"/>
<path d="M114.5 129.0C114.5 131.5 113.9 139.6 114.5 144.0C115.1 148.4 117.6 153.4 118.2 155.2" stroke-width="2.2" opacity="0.12"/>
<path d="M75.8 167.8C78.9 167.2 88.0 165.6 94.5 164.5C101.0 163.4 108.7 161.9 114.5 161.0C120.3 160.1 127.0 159.3 129.5 159.0" stroke-width="2.2" opacity="0.20"/>
<path d="M75.8 167.8C76.8 169.6 79.5 175.5 82.0 179.0C84.5 182.5 87.6 187.1 90.8 189.0C93.9 190.9 99.1 190.0 100.8 190.2" stroke-width="2.2" opacity="0.17"/>
<path d="M129.5 159.0C129.7 161.1 131.6 168.0 130.8 171.5C129.9 175.0 127.6 178.0 124.5 180.2C121.4 182.5 114.1 184.4 112.0 185.2" stroke-width="2.2" opacity="0.17"/>
<path d="M100.8 174.0C102.6 172.8 109.3 168.6 112.0 166.5C114.7 164.4 116.2 162.3 117.0 161.5" stroke-width="2.2" opacity="0.16"/>
<path d="M100.8 174.0C101.8 174.8 104.7 178.6 107.0 179.0C109.3 179.4 113.2 176.9 114.5 176.5" stroke-width="2.2" opacity="0.16"/>
<path d="M117.0 149.0C117.2 150.7 117.0 156.5 118.2 159.0C119.5 161.5 124.1 161.5 124.5 164.0C124.9 166.5 122.8 171.1 120.8 174.0C118.7 176.9 114.9 179.4 112.0 181.5C109.1 183.6 105.8 184.0 103.2 186.5C100.8 189.0 98.9 192.3 97.0 196.5C95.1 200.7 93.2 206.1 92.0 211.5C90.8 216.9 89.9 222.8 89.5 229.0C89.1 235.2 89.3 244.8 89.5 249.0C89.7 253.2 90.5 253.2 90.8 254.0" stroke-width="5.7" opacity="0.26"/>
<path d="M107.0 181.5C105.8 184.4 102.0 193.2 100.0 199.0C98.0 204.8 96.1 210.7 95.0 216.5C93.9 222.3 93.5 231.1 93.2 234.0" stroke-width="2.2" opacity="0.21"/>
<path d="M103.2 192.8C104.3 194.4 106.8 199.0 109.5 202.8C112.2 206.5 116.0 211.9 119.5 215.2C123.0 218.6 128.9 221.5 130.8 222.8" stroke-width="3.4" opacity="0.29"/>
<path d="M130.8 214.5C132.6 213.7 137.6 210.6 142.0 209.5C146.4 208.4 152.0 207.9 157.0 207.8C162.0 207.6 169.5 208.4 172.0 208.5" stroke-width="2.2" opacity="0.24"/>
<path d="M139.5 216.0C142.0 215.3 149.9 213.0 154.5 212.0C159.1 211.0 164.9 210.5 167.0 210.2" stroke-width="2.2" opacity="0.14"/>
<path d="M168.2 199.0C169.7 200.0 174.3 202.1 177.0 205.2C179.7 208.4 182.5 213.2 184.5 217.8C186.5 222.3 188.2 230.2 189.0 232.8" stroke-width="3.4" opacity="0.29"/>
<path d="M98.2 249.0C99.3 250.7 102.6 254.8 104.5 259.0C106.4 263.2 108.2 269.0 109.5 274.0C110.8 279.0 111.4 284.0 112.0 289.0C112.6 294.0 113.1 299.3 113.2 304.0C113.4 308.7 113.0 314.8 113.0 317.0" stroke-width="3.4" opacity="0.29"/>
<path d="M88.2 329.0C90.5 328.2 96.8 325.9 102.0 324.0C107.2 322.1 116.6 318.8 119.5 317.8" stroke-width="2.8" opacity="0.23"/>
<path d="M93.2 321.5L100.8 324.0" stroke-width="2.2" opacity="0.18"/>
<path d="M204.5 36.5C204.5 38.2 203.9 42.5 204.5 46.5C205.1 50.5 206.8 56.5 208.2 60.2C209.7 64.0 212.4 67.5 213.2 69.0" stroke-width="2.2" opacity="0.26"/>
<path d="M204.5 36.5C205.8 35.5 208.9 31.5 212.0 30.2C215.1 29.0 219.7 28.4 223.2 29.0C226.8 29.6 230.5 31.5 233.2 34.0C236.0 36.5 238.5 40.2 239.5 44.0C240.5 47.8 240.5 52.8 239.5 56.5C238.5 60.2 236.2 64.2 233.2 66.5C230.3 68.8 225.3 69.8 222.0 70.2C218.7 70.7 214.7 69.2 213.2 69.0" stroke-width="2.2" opacity="0.29"/>
<path d="M209.5 27.8C212.0 27.3 219.9 24.6 224.5 25.2C229.1 25.9 234.1 28.4 237.0 31.5C239.9 34.6 241.4 39.4 242.0 44.0C242.6 48.6 241.0 56.5 240.8 59.0" stroke-width="2.2" opacity="0.11"/>
<path d="M230.8 36.5C231.4 38.6 234.5 44.8 234.5 49.0C234.5 53.2 232.2 58.4 230.8 61.5C229.3 64.6 226.6 66.7 225.8 67.8" stroke-width="2.2" opacity="0.14"/>
<path d="M215.8 84.0C217.6 83.4 223.0 80.8 227.0 80.2C231.0 79.8 237.4 80.9 239.5 81.0" stroke-width="2.2" opacity="0.21"/>
<path d="M213.2 87.8C211.3 90.2 204.7 97.5 201.5 102.8C198.3 108.0 196.1 113.8 194.0 119.0C191.9 124.2 190.4 129.2 189.0 134.0C187.6 138.8 186.1 145.5 185.5 147.8" stroke-width="9.9" opacity="0.07"/>
<path d="M215.8 84.5C214.0 87.1 208.1 94.5 205.0 100.2C201.9 106.0 199.3 113.0 197.0 119.0C194.7 125.0 192.8 131.1 191.2 136.5C189.7 141.9 188.1 149.0 187.5 151.5" stroke-width="4.0" opacity="0.14"/>
<path d="M209.5 91.5C207.6 94.4 201.4 102.8 198.2 109.0C195.1 115.2 193.0 121.9 190.8 129.0C188.5 136.1 185.5 147.8 184.5 151.5" stroke-width="2.8" opacity="0.14"/>
<path d="M204.5 101.5C202.9 105.2 197.6 116.9 195.0 124.0C192.4 131.1 190.4 138.8 189.0 144.0C187.6 149.2 186.9 153.4 186.5 155.2" stroke-width="2.2" opacity="0.13"/>
<path d="M217.0 85.2C215.8 88.0 211.6 95.5 209.5 101.5C207.4 107.5 205.1 115.2 204.5 121.5C203.9 127.8 204.3 133.4 205.8 139.0C207.2 144.6 210.1 150.5 213.2 155.2C216.4 160.0 220.5 164.4 224.5 167.8C228.5 171.1 232.4 173.7 237.0 175.2C241.6 176.8 247.0 177.4 252.0 177.0C257.0 176.6 264.5 173.5 267.0 172.8" stroke-width="2.2" opacity="0.18"/>
<path d="M242.0 81.5C242.4 84.8 243.2 94.4 244.5 101.5C245.8 108.6 247.6 116.5 249.5 124.0C251.4 131.5 253.7 139.0 255.8 146.5C257.8 154.0 261.0 165.2 262.0 169.0" stroke-width="6.1" opacity="0.18"/>
<path d="M246.5 84.5C247.2 87.8 249.3 97.4 250.8 104.0C252.2 110.6 254.3 120.7 255.0 124.0" stroke-width="2.2" opacity="0.13"/>
<path d="M242.0 81.5C244.1 81.9 249.9 82.1 254.5 84.0C259.1 85.9 264.9 89.4 269.5 92.8C274.1 96.1 278.7 100.0 282.0 104.0C285.3 108.0 287.8 112.8 289.5 116.5C291.2 120.2 291.6 124.8 292.0 126.5" stroke-width="4.0" opacity="0.20"/>
<path d="M249.5 81.5C253.2 83.0 266.0 86.5 272.0 90.2C278.0 94.0 282.2 98.8 285.8 104.0C289.3 109.2 292.0 118.6 293.2 121.5" stroke-width="2.3" opacity="0.17"/>
<path d="M242.0 81.5C243.7 83.2 247.8 87.8 252.0 91.5C256.2 95.2 262.8 100.2 267.0 104.0C271.2 107.8 274.1 110.7 277.0 114.0C279.9 117.3 282.8 120.7 284.5 124.0C286.2 127.3 286.6 132.3 287.0 134.0" stroke-width="3.4" opacity="0.21"/>
<path d="M253.2 130.2C254.7 129.2 258.9 125.5 262.0 124.0C265.1 122.5 268.7 121.7 272.0 121.5C275.3 121.3 280.3 122.5 282.0 122.8" stroke-width="3.4" opacity="0.27"/>
<path d="M253.2 130.2C253.5 132.5 253.7 139.2 254.5 144.0C255.3 148.8 257.0 154.8 258.2 159.0C259.5 163.2 261.4 167.3 262.0 169.0" stroke-width="2.2" opacity="0.22"/>
<path d="M262.0 167.8C262.6 168.6 264.5 171.7 265.8 172.8C267.0 173.8 268.7 174.2 269.5 174.0C270.3 173.8 271.2 173.6 270.8 171.5C270.3 169.4 267.6 163.2 267.0 161.5" stroke-width="2.2" opacity="0.14"/>
<path d="M229.5 172.8C232.0 173.8 239.5 178.2 244.5 179.0C249.5 179.8 257.0 178.0 259.5 177.8" stroke-width="2.2" opacity="0.10"/>
<path d="M232.0 192.8C235.3 191.9 245.3 189.4 252.0 187.8C258.7 186.1 266.0 184.3 272.0 182.8C278.0 181.2 285.5 179.2 288.2 178.5" stroke-width="2.2" opacity="0.17"/>
<path d="M232.0 192.8C232.2 195.0 232.0 202.1 233.2 206.5C234.5 210.9 236.4 216.1 239.5 219.0C242.6 221.9 247.4 223.6 252.0 224.0C256.6 224.4 262.8 223.2 267.0 221.5C271.2 219.8 274.3 217.3 277.0 214.0C279.7 210.7 282.0 206.1 283.2 201.5C284.5 196.9 283.7 190.3 284.5 186.5C285.3 182.7 287.6 179.8 288.2 178.5" stroke-width="2.2" opacity="0.19"/>
<path d="M288.2 178.5C288.2 181.1 288.9 188.5 288.2 194.0C287.6 199.5 285.1 208.6 284.5 211.5" stroke-width="2.2" opacity="0.10"/>
<path d="M229.5 196.5C229.3 200.2 228.2 211.9 228.2 219.0C228.2 226.1 228.5 232.3 229.5 239.0C230.5 245.7 232.4 252.3 234.5 259.0C236.6 265.7 239.5 272.8 242.0 279.0C244.5 285.2 247.4 291.1 249.5 296.5C251.6 301.9 253.0 306.9 254.5 311.5C256.0 316.1 257.3 320.5 258.2 324.0C259.2 327.5 259.7 331.3 260.0 332.8" stroke-width="4.0" opacity="0.17"/>
<path d="M234.5 214.0C234.5 217.3 233.9 227.3 234.5 234.0C235.1 240.7 236.6 247.3 238.2 254.0C239.9 260.7 242.6 268.2 244.5 274.0C246.4 279.8 248.7 286.5 249.5 289.0" stroke-width="2.3" opacity="0.19"/>
<path d="M267.0 222.8C264.9 224.4 257.6 228.8 254.5 232.8C251.4 236.7 249.9 241.7 248.2 246.5C246.6 251.3 245.1 259.0 244.5 261.5" stroke-width="2.2" opacity="0.13"/>
<path d="M245.0 266.5C246.0 267.8 249.2 271.1 250.8 274.0C252.2 276.9 253.1 280.2 254.0 284.0C254.9 287.8 255.3 291.9 256.2 296.5C257.2 301.1 259.0 306.1 259.5 311.5C260.0 316.9 260.1 322.8 259.5 329.0C258.9 335.2 257.0 343.2 255.8 349.0C254.5 354.8 252.6 361.5 252.0 364.0" stroke-width="4.7" opacity="0.16"/>
<path d="M243.2 262.8C245.5 262.5 252.2 260.5 257.0 261.5C261.8 262.5 267.4 265.7 272.0 269.0C276.6 272.3 281.0 276.9 284.5 281.5C288.0 286.1 291.2 292.1 293.2 296.5C295.3 300.9 296.4 305.9 297.0 307.8" stroke-width="2.2" opacity="0.22"/>
<path d="M254.5 261.5C256.6 261.9 262.8 261.9 267.0 264.0C271.2 266.1 275.8 269.8 279.5 274.0C283.2 278.2 286.8 284.0 289.5 289.0C292.2 294.0 294.7 301.5 295.8 304.0" stroke-width="2.2" opacity="0.15"/>
<path d="M300.8 297.8C299.7 300.0 296.8 307.3 294.5 311.5C292.2 315.7 289.5 319.9 287.0 322.8C284.5 325.6 280.8 327.5 279.5 328.5" stroke-width="2.2" opacity="0.19"/>
<path d="M227.0 354.0C229.1 355.2 235.3 359.0 239.5 361.5C243.7 364.0 248.3 367.0 252.0 369.0C255.7 371.0 259.9 372.8 261.5 373.5" stroke-width="4.0" opacity="0.21"/>
<path d="M234.5 355.2C236.6 357.1 243.7 363.6 247.0 366.5C250.3 369.4 253.2 371.7 254.5 372.8" stroke-width="2.2" opacity="0.19"/>
<path d="M429.5 5.2C429.7 8.0 430.1 15.9 430.8 21.5C431.4 27.1 432.6 34.2 433.2 39.0C433.9 43.8 434.3 48.4 434.5 50.2" stroke-width="3.4" opacity="0.27"/>
<path d="M429.5 5.2C427.8 4.8 422.8 2.3 419.5 2.8C416.2 3.2 412.2 5.0 409.5 7.8C406.8 10.5 404.3 15.0 403.2 19.0C402.2 23.0 402.4 27.5 403.2 31.5C404.1 35.5 405.5 40.7 408.2 42.8C411.0 44.8 415.3 44.4 419.5 44.0C423.7 43.6 431.0 40.9 433.2 40.2" stroke-width="2.2" opacity="0.21"/>
<path d="M413.2 9.0C412.4 11.1 408.9 17.3 408.2 21.5C407.6 25.7 408.7 30.7 409.5 34.0C410.3 37.3 412.6 40.2 413.2 41.5" stroke-width="2.2" opacity="0.13"/>
<path d="M407.0 54.0C406.0 54.6 403.2 56.5 400.8 57.8C398.2 59.0 393.5 60.9 392.0 61.5" stroke-width="2.2" opacity="0.16"/>
<path d="M400.7 57.7C399.0 60.4 393.8 68.0 390.7 74.0C387.6 80.0 384.5 87.3 382.0 94.0C379.5 100.7 377.2 107.8 375.7 114.0C374.2 120.2 373.6 126.3 373.2 131.5C372.8 136.7 373.1 140.8 373.5 145.0C373.9 149.2 375.3 154.6 375.7 156.5" stroke-width="5.4" opacity="0.26"/>
<path d="M393.2 61.5C391.8 64.8 387.0 74.8 384.5 81.5C382.0 88.2 380.3 94.4 378.2 101.5C376.1 108.6 373.2 117.8 372.0 124.0C370.8 130.2 371.2 136.5 371.0 139.0" stroke-width="2.3" opacity="0.20"/>
<path d="M382.0 130.0C382.4 131.5 384.0 135.8 384.5 139.0C385.0 142.2 384.4 145.2 384.8 149.0C385.2 152.8 386.0 156.5 387.0 161.5C388.0 166.5 389.8 173.4 390.7 179.0C391.6 184.6 392.2 192.3 392.5 195.0" stroke-width="5.4" opacity="0.26"/>
<path d="M405.7 60.0C405.6 63.6 405.1 73.8 405.0 81.5C404.9 89.2 405.1 98.4 405.0 106.5C404.9 114.6 404.9 122.1 404.6 130.0C404.3 137.9 403.7 145.3 403.2 154.0C402.7 162.7 401.7 177.3 401.4 182.0" stroke-width="6.5" opacity="0.26"/>
<path d="M413.2 56.5C415.5 58.2 422.6 61.9 427.0 66.5C431.4 71.1 436.2 78.2 439.5 84.0C442.8 89.8 444.9 96.0 447.0 101.5C449.1 107.0 450.8 112.1 452.0 117.0C453.2 121.9 453.9 124.8 454.0 131.0C454.1 137.2 453.8 147.5 452.6 154.0C451.4 160.5 449.6 165.8 447.0 170.0C444.4 174.2 441.2 176.6 437.0 179.0C432.8 181.4 424.5 183.6 422.0 184.5" stroke-width="6.1" opacity="0.28"/>
<path d="M419.5 61.5C421.6 63.6 428.2 68.8 432.0 74.0C435.8 79.2 439.5 86.8 442.0 93.0C444.5 99.2 446.2 105.0 447.0 111.0C447.8 117.0 447.4 123.3 447.0 129.0C446.6 134.7 446.2 139.6 444.5 145.0C442.8 150.4 440.3 156.5 437.0 161.5C433.7 166.5 428.9 171.2 424.5 175.0C420.1 178.8 413.0 182.5 410.7 184.0" stroke-width="3.4" opacity="0.21"/>
<path d="M407.0 145.0C407.7 147.0 409.3 152.8 411.0 157.0C412.7 161.2 416.0 167.8 417.0 170.0" stroke-width="2.2" opacity="0.15"/>
<path d="M417.0 171.0C419.0 170.3 425.3 169.3 429.0 167.0C432.7 164.7 437.3 158.7 439.0 157.0" stroke-width="2.2" opacity="0.13"/>
<path d="M447.0 64.0C448.7 65.7 454.3 69.4 457.0 74.0C459.7 78.6 461.7 85.7 463.2 91.5C464.7 97.3 465.7 103.1 466.0 109.0C466.3 114.9 464.8 122.0 465.0 127.0C465.2 132.0 465.4 134.9 467.0 139.0C468.6 143.1 471.2 148.0 474.5 151.5C477.8 155.0 482.6 157.8 487.0 160.0C491.4 162.2 498.7 164.2 501.0 165.0" stroke-width="4.7" opacity="0.19"/>
<path d="M452.0 66.5C453.4 68.2 458.4 71.9 460.7 76.5C463.0 81.1 464.9 91.1 465.7 94.0" stroke-width="2.2" opacity="0.17"/>
<path d="M457.0 121.0C457.2 122.8 457.2 128.2 458.0 132.0C458.8 135.8 460.1 140.3 462.0 144.0C463.9 147.7 466.6 151.1 469.5 154.0C472.4 156.9 476.2 159.6 479.5 161.5C482.8 163.4 485.1 164.8 489.0 165.5C492.9 166.2 500.7 165.9 503.0 166.0" stroke-width="4.7" opacity="0.24"/>
<path d="M507.0 74.0C507.0 77.3 507.2 86.5 507.0 94.0C506.8 101.5 506.3 109.8 505.7 119.0C505.1 128.2 504.0 140.7 503.2 149.0C502.4 157.3 501.7 161.9 500.7 169.0C499.7 176.1 498.4 181.5 497.0 191.5C495.6 201.5 493.5 217.8 492.0 229.0C490.5 240.2 488.7 249.0 488.2 259.0C487.7 269.0 488.4 279.0 489.0 289.0C489.6 299.0 491.0 309.5 492.0 319.0C493.0 328.5 494.5 341.5 495.0 346.0" stroke-width="2.3" opacity="0.23"/>
<path d="M513.2 76.5C513.1 80.2 512.9 91.1 512.5 99.0C512.1 106.9 511.4 114.8 510.7 124.0C510.0 133.2 509.4 144.0 508.5 154.0C507.6 164.0 506.4 172.8 505.0 184.0C503.6 195.2 501.7 208.8 500.0 221.0C498.3 233.2 496.2 247.3 495.0 257.0C493.8 266.7 493.3 275.3 493.0 279.0" stroke-width="2.3" opacity="0.23"/>
<path d="M507.0 74.0C507.6 73.8 509.7 72.3 510.7 72.7C511.7 73.1 512.8 75.9 513.2 76.5" stroke-width="2.2" opacity="0.13"/>
<path d="M492.0 166.5C492.0 168.2 491.2 174.4 492.0 176.5C492.8 178.6 496.2 178.6 497.0 179.0" stroke-width="2.2" opacity="0.13"/>
<path d="M502.0 164.0C503.7 164.2 510.1 163.5 512.0 165.2C513.9 166.9 513.6 171.1 513.2 174.0C512.8 176.9 510.5 180.4 509.5 182.7C508.5 185.0 507.4 186.9 507.0 187.7" stroke-width="2.2" opacity="0.15"/>
<path d="M387.0 199.0C386.2 200.7 382.8 205.2 382.0 209.0C381.2 212.8 381.0 217.3 382.0 221.5C383.0 225.7 385.7 231.1 388.2 234.0C390.7 236.9 394.5 239.0 397.0 239.0C399.5 239.0 402.0 236.9 403.2 234.0C404.5 231.1 404.9 225.7 404.5 221.5C404.1 217.3 402.4 212.3 400.7 209.0C399.0 205.7 395.5 202.8 394.5 201.5" stroke-width="2.3" opacity="0.25"/>
<path d="M397.0 206.5C398.0 207.8 401.5 213.2 403.2 214.0C404.9 214.8 406.4 211.9 407.0 211.5" stroke-width="2.2" opacity="0.16"/>
<path d="M397.0 190.0C400.5 190.4 410.3 192.3 418.0 192.5C425.7 192.7 435.2 191.8 443.0 191.0C450.8 190.2 460.9 188.5 464.5 188.0" stroke-width="2.2" opacity="0.24"/>
<path d="M410.7 224.0C412.6 224.6 417.6 227.5 422.0 227.7C426.4 227.9 432.4 226.6 437.0 225.2C441.6 223.8 446.2 221.3 449.5 219.0C452.8 216.7 455.8 212.8 457.0 211.5" stroke-width="2.2" opacity="0.18"/>
<path d="M422.0 235.2C424.5 234.6 432.0 233.4 437.0 231.5C442.0 229.6 449.5 225.2 452.0 224.0" stroke-width="2.2" opacity="0.11"/>
<path d="M464.5 188.0C463.4 189.8 458.8 195.1 458.0 199.0C457.2 202.9 458.4 206.5 459.5 211.5C460.6 216.5 463.2 222.8 464.5 229.0C465.8 235.2 467.4 241.5 467.5 249.0C467.6 256.5 465.1 265.7 465.0 274.0C464.9 282.3 465.4 290.7 467.0 299.0C468.6 307.3 471.8 316.1 474.5 324.0C477.2 331.9 480.3 340.2 483.0 346.5C485.7 352.8 489.4 359.0 490.7 361.5" stroke-width="5.0" opacity="0.24"/>
<path d="M462.0 204.0C462.8 207.3 465.4 217.0 467.0 224.0C468.6 231.0 470.9 237.7 471.5 246.0C472.1 254.3 470.4 265.2 470.5 274.0C470.6 282.8 470.7 290.7 472.0 299.0C473.3 307.3 475.7 315.7 478.2 324.0C480.7 332.3 484.3 342.3 487.0 349.0C489.7 355.7 493.2 361.5 494.5 364.0" stroke-width="2.3" opacity="0.22"/>
<path d="M415.7 204.0C415.5 207.3 415.3 217.3 414.5 224.0C413.7 230.7 412.2 237.8 410.7 244.0C409.2 250.2 407.4 255.7 405.7 261.5C404.0 267.3 402.2 273.6 400.7 279.0C399.3 284.4 397.6 291.5 397.0 294.0" stroke-width="5.0" opacity="0.20"/>
<path d="M409.5 204.0L409.0 221.5" stroke-width="2.2" opacity="0.19"/>
<path d="M393.2 269.0C392.2 272.3 389.1 281.5 387.0 289.0C384.9 296.5 382.6 305.7 380.7 314.0C378.8 322.3 377.0 331.5 375.7 339.0C374.5 346.5 373.6 355.7 373.2 359.0" stroke-width="3.4" opacity="0.21"/>
<path d="M373.2 356.5C372.4 358.6 369.9 365.9 368.2 369.0C366.5 372.1 364.0 374.2 363.2 375.2" stroke-width="2.2" opacity="0.21"/>
<path d="M375.7 359.0C376.1 360.7 377.6 366.1 378.2 369.0C378.8 371.9 379.3 375.2 379.5 376.5" stroke-width="2.2" opacity="0.21"/>
<path d="M472.0 365.2C474.5 365.4 481.6 366.1 487.0 366.5C492.4 366.9 498.9 367.3 504.5 367.7C510.1 368.1 518.0 368.8 520.7 369.0" stroke-width="4.7" opacity="0.25"/>
<path d="M482.0 361.5C484.5 362.8 492.8 366.9 497.0 369.0C501.2 371.1 505.3 373.2 507.0 374.0" stroke-width="2.2" opacity="0.20"/></g><g transform="translate(11.2 9.8)"><path d="M-5.100 0C-3.200-4.300 3.200-4.300 5.100 0C3.200 4.300-3.200 4.300-5.100 0Z" fill="#fff" stroke="#6e6e6e" stroke-width="1.300" stroke-linejoin="round"/><circle r="1.700" fill="#6e6e6e"/></g><g transform="translate(6.900 49.300)"><path d="M1.600 4.800V2.600C1.600-.6 6.400-.6 6.400 2V2.600" fill="none" stroke="#777" stroke-width="1.300"/><rect x="0" y="4.800" width="7.600" height="5.600" fill="#777"/><path d="M1 5.800h1.400v1.200H1zM3.800 5.800h1.400v1.200H3.800zM2.400 7.200h1.400v1.200H2.400zM5.200 7.200h1.400v1.200H5.200zM1 8.600h1.400v1.200H1zM3.800 8.600h1.400v1.200H3.800z" fill="#fff"/></g></svg></div>
<div class="layer abs" style="top:170.9px;height:65.900px"><svg width="66" height="66" viewBox="0 0 66 66"><g fill="none" stroke="#7f8799" stroke-width="0.75" opacity="0.60" stroke-linecap="round" stroke-linejoin="round"><path d="M9.5 15.1C9.7 15.0 10.4 14.2 10.8 14.3C11.2 14.4 11.8 15.1 11.8 15.6C11.8 16.1 11.3 16.9 11.0 17.1C10.7 17.3 10.0 16.9 9.8 16.9" opacity="0.40"/><path d="M8.0 19.6C8.1 20.7 8.2 24.1 8.5 26.1C8.8 28.1 9.8 30.7 10.0 31.6"/><path d="M13.0 19.1C13.1 20.1 13.5 22.9 13.5 25.1C13.5 27.3 13.1 30.9 13.0 32.1"/><path d="M10.5 18.1C10.6 19.3 10.8 22.9 11.0 25.1C11.2 27.4 11.4 30.5 11.5 31.6" opacity="1.30"/><path d="M8.0 20.6C7.5 21.3 5.8 23.8 5.0 24.6C4.2 25.4 3.3 25.4 3.0 25.6"/><path d="M10.0 32.1C9.9 33.1 9.4 36.3 9.5 38.1C9.6 39.9 10.3 42.3 10.5 43.1"/><path d="M14.0 32.1C13.9 32.9 13.8 35.5 13.5 37.1C13.2 38.7 12.7 40.9 12.5 41.6"/><path d="M13.0 39.1C13.4 39.2 15.0 39.4 15.5 39.6C16.0 39.9 15.9 40.4 16.0 40.6"/><path d="M13.0 43.1C13.2 43.9 14.0 46.4 14.0 48.1C14.0 49.8 13.4 51.9 13.0 53.1C12.6 54.4 11.8 55.2 11.5 55.6"/><path d="M27.0 12.1L27.5 16.1" opacity="0.60"/><path d="M29.5 12.6L29.0 16.1" opacity="0.60"/><path d="M26.5 18.1C26.4 19.3 25.9 22.6 26.0 25.1C26.1 27.6 26.8 31.8 27.0 33.1"/><path d="M30.0 19.1C30.4 19.8 32.2 21.4 32.5 23.1C32.8 24.8 32.4 27.4 32.0 29.1C31.6 30.8 30.3 32.4 30.0 33.1"/><path d="M28.0 18.1C28.0 19.3 27.8 22.8 27.8 25.1C27.8 27.4 28.0 30.9 28.0 32.1" opacity="1.30"/><path d="M32.5 23.1C32.7 23.8 33.7 25.8 33.5 27.1C33.3 28.4 31.8 30.4 31.5 31.1"/><path d="M27.0 34.1C27.1 35.6 27.3 40.3 27.5 43.1C27.7 45.9 28.4 48.9 28.0 51.1C27.6 53.3 25.5 55.3 25.0 56.1"/><path d="M30.0 34.1C30.3 35.3 31.4 38.8 32.0 41.1C32.6 43.4 33.4 45.8 33.5 48.1C33.6 50.4 32.7 53.9 32.5 55.1"/><path d="M44.5 11.6L44.5 16.1" opacity="0.60"/><path d="M46.5 11.6L46.5 16.1" opacity="0.60"/><path d="M42.0 20.1C41.9 21.1 41.2 24.1 41.5 26.1C41.8 28.1 42.8 30.4 43.5 32.1C44.2 33.8 45.6 35.4 46.0 36.1"/><path d="M48.0 19.6C48.2 20.5 49.3 23.2 49.5 25.1C49.7 27.0 49.3 29.4 49.0 31.1C48.7 32.9 47.8 34.9 47.5 35.6"/><path d="M46.0 36.6C45.8 37.7 45.0 40.9 44.5 43.1C44.0 45.4 43.4 48.2 43.0 50.1C42.6 52.0 42.2 53.9 42.0 54.6"/><path d="M48.0 36.1C48.2 37.3 48.8 40.8 49.0 43.1C49.2 45.4 48.9 48.5 49.5 50.1C50.1 51.7 52.0 52.2 52.5 52.6"/><path d="M40.5 54.1L43.5 55.1" opacity="0.60"/><path d="M55.5 13.1L56.0 14.6" opacity="0.60"/><path d="M58.5 12.6L59.0 14.1" opacity="0.60"/><path d="M59.0 17.1L61.5 19.1" opacity="0.60"/></g><g transform="translate(10.5 9.5)" fill="none" stroke="#6a6a6a" stroke-width="1.300" stroke-linecap="round"><path d="M-1-3.100C-3.200-2.700-4.600-1.300-5.200 0C-4.700 1.100-4 1.900-3.200 2.500"/><path d="M3-2.300C4-1.700 4.800-.8 5.200 0C3.800 3 .2 3.800-1.600 3.200"/><path d="M.9-.7C2 1 .6 2.500-.9 2.100" stroke-width="1.100"/><path d="M-4.400 4.500L3.900 -4.300" stroke-width="1.200"/></g></svg></div>
<div class="layer abs" style="top:239.5px;height:65.900px"><svg width="66" height="66" viewBox="0 0 66 66"><g fill="none" stroke="#8a8f9a" stroke-width="0.70" opacity="0.50" stroke-linecap="round" stroke-linejoin="round"><path d="M6.5 15.5C6.8 15.4 7.5 14.6 8.0 14.7C8.4 14.8 9.2 15.8 9.2 16.3C9.2 16.8 8.2 17.5 8.0 17.7" opacity="0.60"/><path d="M4.0 19.5C3.8 20.5 2.7 23.3 2.5 25.5C2.3 27.7 2.9 31.3 3.0 32.5"/><path d="M9.0 20.5C9.2 21.5 10.1 24.5 10.0 26.5C9.9 28.5 8.8 31.5 8.5 32.5"/><path d="M3.0 33.5C2.8 34.5 1.8 37.5 2.0 39.5C2.2 41.5 3.2 44.2 4.0 45.5C4.8 46.8 6.1 47.2 6.5 47.5"/><path d="M8.5 33.5C8.9 34.5 10.8 37.7 11.0 39.5C11.2 41.3 10.6 43.2 10.0 44.5C9.4 45.8 7.9 47.0 7.5 47.5"/><path d="M6.5 47.5C6.4 48.5 6.2 52.1 6.0 53.5C5.8 54.9 5.6 55.6 5.5 56.0"/><path d="M7.5 48.0L7.5 53.5"/><path d="M17.5 19.5C17.8 18.7 18.2 15.7 19.0 14.5C19.8 13.3 21.6 12.6 22.5 12.5C23.4 12.4 24.2 13.8 24.5 14.0"/><path d="M17.5 19.5L21.0 18.5"/><path d="M21.5 20.5C21.3 21.5 20.3 24.7 20.5 26.5C20.7 28.3 22.2 30.7 22.5 31.5"/><path d="M27.0 20.5C27.2 21.3 28.1 23.8 28.0 25.5C27.9 27.2 26.8 30.1 26.5 31.0"/><path d="M24.5 21.0L25.0 30.5"/><path d="M22.0 32.5C21.6 33.3 20.0 35.7 19.5 37.5C19.0 39.3 18.6 41.8 19.0 43.5C19.4 45.2 21.5 46.8 22.0 47.5"/><path d="M26.5 32.5L26.0 37.5"/><path d="M22.0 47.5C22.7 48.0 25.0 49.5 26.0 50.5C27.0 51.5 27.7 53.0 28.0 53.5"/><path d="M27.5 43.5C27.6 44.5 27.8 47.7 28.0 49.5C28.2 51.3 28.4 53.7 28.5 54.5"/><path d="M23.0 55.5L26.0 55.0"/><path d="M37.0 12.5L36.5 17.5" opacity="0.70"/><path d="M39.5 12.5L40.0 17.5" opacity="0.70"/><path d="M36.5 18.5C36.2 19.3 34.8 21.7 34.5 23.5C34.2 25.3 34.7 27.7 35.0 29.5C35.3 31.3 36.2 33.7 36.5 34.5"/><path d="M40.5 18.5C41.0 19.3 42.9 21.7 43.5 23.5C44.1 25.3 44.1 27.7 44.0 29.5C43.9 31.3 43.2 33.7 43.0 34.5"/><path d="M38.5 18.5L38.5 33.5"/><path d="M36.5 35.0C37.1 35.2 38.8 36.5 40.0 36.5C41.2 36.5 42.9 35.2 43.5 35.0"/><path d="M36.5 36.5C37.1 36.8 38.8 38.0 40.0 38.0C41.2 38.0 42.9 36.8 43.5 36.5"/><path d="M37.0 38.0C36.9 39.2 36.5 42.9 36.5 45.5C36.5 48.1 37.2 51.8 37.0 53.5C36.8 55.2 35.8 55.6 35.5 56.0"/><path d="M43.0 38.0C43.2 39.2 43.8 43.1 44.0 45.5C44.2 47.9 44.4 51.3 44.5 52.5"/><path d="M51.0 16.0C51.2 15.6 51.7 14.0 52.5 13.5C53.3 13.0 54.9 13.0 56.0 13.0C57.1 13.0 58.5 13.4 59.0 13.5"/><path d="M52.5 14.5L53.5 17.5"/><path d="M52.5 21.5C52.0 22.2 49.9 24.0 49.5 25.5C49.1 27.0 49.5 29.2 50.0 30.5C50.5 31.8 52.1 33.0 52.5 33.5"/><path d="M56.5 21.0C56.8 21.8 58.2 23.9 58.5 25.5C58.8 27.1 58.5 29.2 58.0 30.5C57.5 31.8 55.9 33.0 55.5 33.5"/><path d="M54.0 33.5C54.1 34.3 54.8 36.8 54.5 38.5C54.2 40.2 53.0 41.7 52.5 43.5C52.0 45.3 51.4 47.7 51.5 49.5C51.6 51.3 52.8 53.7 53.0 54.5"/><path d="M54.0 40.5C54.7 40.2 56.7 38.6 58.0 38.5C59.3 38.4 61.3 39.8 62.0 40.0"/><path d="M52.5 43.0C53.4 42.8 56.4 42.2 58.0 42.0C59.6 41.8 61.3 41.6 62.0 41.5"/><path d="M56.5 48.5L57.5 49.5" opacity="0.70"/><path d="M59.0 48.0L60.0 49.5" opacity="0.70"/><path d="M58.5 52.0L61.0 53.0" opacity="0.70"/></g><g transform="translate(10.5 9.5)" fill="none" stroke="#6a6a6a" stroke-width="1.300" stroke-linecap="round"><path d="M-1-3.100C-3.200-2.700-4.600-1.300-5.200 0C-4.700 1.100-4 1.900-3.200 2.500"/><path d="M3-2.300C4-1.700 4.800-.8 5.200 0C3.800 3 .2 3.800-1.600 3.200"/><path d="M.9-.7C2 1 .6 2.500-.9 2.100" stroke-width="1.100"/><path d="M-4.400 4.500L3.900 -4.300" stroke-width="1.200"/></g></svg></div>
<div class="layer abs" style="top:308.6px;height:65.900px"><svg width="66" height="66" viewBox="0 0 66 66"><g fill="none" stroke="#8f949e" stroke-width="0.70" opacity="0.38" stroke-linecap="round" stroke-linejoin="round"><path d="M6.0 15.2C6.2 15.0 6.8 14.1 7.2 14.2C7.6 14.3 8.2 15.1 8.2 15.6C8.2 16.1 7.4 16.9 7.2 17.2" opacity="0.60"/><path d="M5.5 19.4C5.2 20.2 3.6 22.7 3.5 24.4C3.4 26.1 4.4 28.1 5.0 29.4C5.6 30.7 6.7 31.9 7.0 32.4"/><path d="M9.0 19.4C9.5 20.2 11.6 22.7 12.0 24.4C12.4 26.1 11.9 28.1 11.5 29.4C11.1 30.7 9.8 31.9 9.5 32.4"/><path d="M7.0 20.4C7.2 21.4 8.4 24.7 8.5 26.4C8.6 28.1 7.7 29.7 7.5 30.4"/><path d="M6.0 33.4C6.5 33.9 7.9 36.4 9.0 36.4C10.1 36.4 11.9 33.9 12.5 33.4"/><path d="M6.5 35.4C7.0 35.8 8.5 37.9 9.5 37.9C10.5 37.9 12.0 35.8 12.5 35.4"/><path d="M6.5 36.4C6.4 37.6 5.8 41.1 6.0 43.4C6.2 45.7 7.2 48.4 7.5 50.4C7.8 52.4 7.9 54.6 8.0 55.4"/><path d="M12.0 36.4C12.1 37.6 12.5 41.1 12.5 43.4C12.5 45.7 12.1 49.2 12.0 50.4"/><path d="M24.5 14.4C24.7 14.2 25.4 13.4 25.8 13.4C26.2 13.4 26.8 14.4 27.0 14.6" opacity="0.60"/><path d="M23.5 18.4C23.2 18.9 21.9 20.6 21.5 21.4C21.1 22.2 21.1 23.1 21.0 23.4"/><path d="M25.0 18.4C25.1 19.4 25.5 22.4 25.5 24.4C25.5 26.4 25.1 29.4 25.0 30.4"/><path d="M28.5 18.9C28.8 19.6 30.2 21.6 30.5 23.4C30.8 25.1 30.1 28.4 30.0 29.4"/><path d="M24.5 31.4C25.1 31.1 26.9 29.9 28.0 29.9C29.1 29.9 30.5 31.1 31.0 31.4"/><path d="M24.5 32.4C24.3 33.6 23.8 36.9 23.5 39.4C23.2 41.9 23.2 44.7 23.0 47.4C22.8 50.1 22.6 54.1 22.5 55.4"/><path d="M30.5 32.4C30.4 33.6 29.8 37.1 30.0 39.4C30.2 41.7 31.0 44.1 31.5 46.4C32.0 48.7 32.8 52.2 33.0 53.4"/><path d="M37.5 13.4C37.7 13.3 38.2 12.6 38.5 12.6C38.8 12.6 39.3 13.4 39.5 13.6" opacity="0.60"/><path d="M36.5 18.4C36.3 19.4 35.5 22.4 35.5 24.4C35.5 26.4 36.3 29.4 36.5 30.4"/><path d="M41.0 18.4C41.2 19.4 42.3 22.4 42.5 24.4C42.7 26.4 42.1 29.4 42.0 30.4"/><path d="M39.0 17.4L39.0 32.4"/><path d="M36.5 32.4C36.3 33.4 35.4 36.2 35.5 38.4C35.6 40.6 36.3 43.4 37.0 45.4C37.7 47.4 39.2 48.9 39.5 50.4C39.8 51.9 38.7 53.7 38.5 54.4"/><path d="M42.0 32.4C42.2 33.6 42.8 37.1 43.0 39.4C43.2 41.7 43.5 44.1 43.5 46.4C43.5 48.7 43.1 52.2 43.0 53.4"/><path d="M51.5 14.4C51.7 14.2 52.2 13.4 52.5 13.4C52.8 13.4 53.3 14.4 53.5 14.6" opacity="0.60"/><path d="M49.5 18.4C49.3 19.4 48.4 22.4 48.5 24.4C48.6 26.4 49.8 29.4 50.0 30.4"/><path d="M55.5 18.4C55.8 19.2 56.9 21.4 57.0 23.4C57.1 25.4 56.2 29.2 56.0 30.4"/><path d="M51.0 18.4L51.5 26.4" opacity="1.30"/><path d="M53.5 18.4L54.0 27.4" opacity="1.30"/><path d="M55.5 19.4L55.0 26.4"/><path d="M50.5 32.4C50.4 33.7 50.0 37.7 50.0 40.4C50.0 43.1 50.3 45.9 50.5 48.4C50.7 50.9 50.9 54.2 51.0 55.4"/><path d="M55.5 32.4C55.7 33.7 56.2 37.7 56.5 40.4C56.8 43.1 56.8 46.1 57.0 48.4C57.2 50.7 57.4 53.4 57.5 54.4"/><path d="M57.0 11.9L63.0 11.9" opacity="0.80"/></g><g transform="translate(10.5 9.5)" fill="none" stroke="#6a6a6a" stroke-width="1.300" stroke-linecap="round"><path d="M-1-3.100C-3.200-2.700-4.600-1.300-5.200 0C-4.700 1.100-4 1.900-3.200 2.500"/><path d="M3-2.300C4-1.700 4.800-.8 5.200 0C3.800 3 .2 3.800-1.600 3.200"/><path d="M.9-.7C2 1 .6 2.500-.9 2.100" stroke-width="1.100"/><path d="M-4.400 4.500L3.900 -4.300" stroke-width="1.200"/></g></svg></div>
<div class="layer abs" style="top:377.300px;height:40.300px;background:linear-gradient(#fff 55%,#efefef)"><svg width="66" height="40" viewBox="0 0 66 40"><circle cx="48.400" cy="20" r="15.200" fill="#fff" stroke="#dcdcdc" stroke-width=".8"/><g transform="translate(10.5 9.5)"><path d="M-5.100 0C-3.200-4.300 3.200-4.300 5.100 0C3.200 4.300-3.200 4.300-5.100 0Z" fill="#fff" stroke="#6e6e6e" stroke-width="1.300" stroke-linejoin="round"/><circle r="1.700" fill="#6e6e6e"/></g></svg></div>
<div class="ft abs"></div>
<div id="ring" class="abs"><i></i></div>
</div></div></div>

<svg class="abs" style="left:392px;top:553px" width="16" height="16" viewBox="-8 -8 16 16"><circle cx="-.15" cy="-.1" r="6.200" fill="#c9c9c9"/><path d="M-4.300 0L-1.500-3.300H1.500L4.300 0L1.500 3.300H-1.500Z" fill="#848484"/><path d="M-6.300-.1H6" stroke="#8c8c8c" stroke-width=".9"/></svg>
</div>
</body></html>
